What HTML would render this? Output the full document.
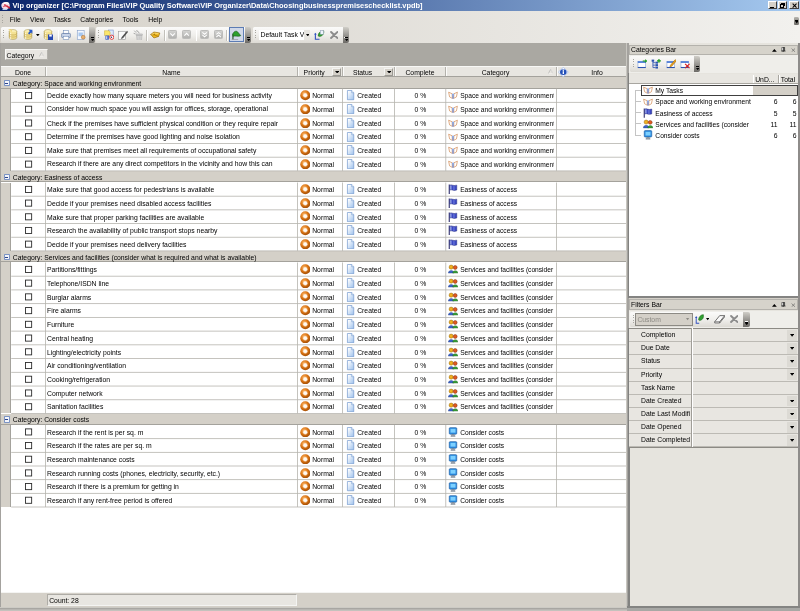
<!DOCTYPE html>
<html><head><meta charset="utf-8"><title>Vip organizer</title>
<style>
html,body{margin:0;padding:0;}
body{width:800px;height:611px;overflow:hidden;background:#d4d0c8;position:relative;font-family:"Liberation Sans", sans-serif;font-size:6.8px;color:#000;}
div,span.t,svg.i{position:absolute;box-sizing:border-box;}
span.t{white-space:pre;line-height:10px;margin-top:-4.1px;}
span.c{transform:translateX(-50%);}
span.r{transform:translateX(-100%);}
.cell{overflow:hidden;}
</style></head><body><div id="app" style="left:0;top:0;width:800px;height:611px;will-change:transform;">
<div style="left:0.00px;top:0.00px;width:800.00px;height:11.30px;background:linear-gradient(90deg,#0a246a,#a6caf0);"></div>
<svg class="i" style="left:1.20px;top:0.60px" width="10.40" height="9.80" viewBox="0 0 16 16" preserveAspectRatio="none"><ellipse cx="7" cy="7.5" rx="6.5" ry="6" fill="#f8dce6"/><ellipse cx="6" cy="14" rx="4" ry="1.4" fill="#b8d0f4"/><path d="M4 4.5c3-2 6-2 8 0" stroke="#fff" stroke-width="2.2" fill="none"/><path d="M5 6l9 5.5" stroke="#d02038" stroke-width="2.4"/><path d="M3 9.5l7-2" stroke="#e06878" stroke-width="1.6"/></svg>
<span class="t" style="left:12.50px;top:4.70px;color:#fff;font-weight:bold;font-size:7.44px;">Vip organizer [C:\Program Files\VIP Quality Software\VIP Organizer\Data\Choosingbusinesspremiseschecklist.vpdb]</span>
<div style="left:768.20px;top:1.20px;width:8.60px;height:8.20px;background:#d4d0c8;border:0.7px solid;border-color:#fff #404040 #404040 #fff;"></div>
<div style="left:770.30px;top:6.60px;width:3.60px;height:1.20px;background:#000;"></div>
<div style="left:778.20px;top:1.20px;width:9.20px;height:8.20px;background:#d4d0c8;border:0.7px solid;border-color:#fff #404040 #404040 #fff;"></div>
<div style="left:781.30px;top:2.80px;width:4.00px;height:3.60px;border:0.7px solid #000;border-top-width:1.2px;"></div>
<div style="left:779.80px;top:4.40px;width:4.00px;height:3.60px;border:0.7px solid #000;border-top-width:1.2px;background:#d4d0c8;"></div>
<div style="left:789.40px;top:1.20px;width:9.40px;height:8.20px;background:#d4d0c8;border:0.7px solid;border-color:#fff #404040 #404040 #fff;"></div>
<svg class="i" style="left:791.50px;top:2.80px" width="5.20" height="5.20" viewBox="0 0 16 16" preserveAspectRatio="none"><path d="M2 2l12 12M14 2L2 14" stroke="#000" stroke-width="3.2"/></svg>
<div style="left:0.00px;top:11.30px;width:800.00px;height:31.90px;background:linear-gradient(90deg,#d5d1c9 0%,#f2f1ee 100%);"></div>
<div style="left:2.20px;top:14.50px;width:1.00px;height:10.00px;background:repeating-linear-gradient(180deg,#a8a6a0 0 1px,transparent 1px 2.5px);"></div>
<span class="t" style="left:9.80px;top:19.40px;">File</span>
<span class="t" style="left:30.00px;top:19.40px;">View</span>
<span class="t" style="left:53.50px;top:19.40px;">Tasks</span>
<span class="t" style="left:80.30px;top:19.40px;">Categories</span>
<span class="t" style="left:122.50px;top:19.40px;">Tools</span>
<span class="t" style="left:148.30px;top:19.40px;">Help</span>
<div style="left:794.00px;top:16.60px;width:5.00px;height:8.00px;background:linear-gradient(180deg,#b8b6b0,#6c6a66);border-radius:1px 1.5px 1.5px 1px;"></div>
<div style="left:795.20px;top:19.60px;width:2.80px;height:0.90px;background:#000;"></div>
<svg class="i" style="left:794.80px;top:21.20px" width="3.60" height="2.40" viewBox="0 0 16 16" preserveAspectRatio="none"><path d="M0 0h16L8 16z" fill="#000"/></svg>
<div style="left:0.60px;top:27.40px;width:88.40px;height:15.20px;background:linear-gradient(180deg,#fbfbfa 0%,#f0efec 50%,#dcdad4 100%);border-radius:1.5px 0 0 1.5px;"></div>
<div style="left:89.00px;top:27.40px;width:6.30px;height:15.20px;background:linear-gradient(180deg,#d0cec8 0%,#8e8c88 60%,#6e6c68 100%);border-radius:0 2px 2px 0;"></div>
<div style="left:90.60px;top:37.00px;width:3.00px;height:0.90px;background:#fff;"></div>
<div style="left:90.90px;top:37.30px;width:3.00px;height:0.90px;background:#000;"></div>
<svg class="i" style="left:90.90px;top:38.80px" width="3.40" height="2.20" viewBox="0 0 16 16" preserveAspectRatio="none"><path d="M0 0h16L8 16z" fill="#000"/></svg>
<div style="left:2.80px;top:30.40px;width:1.00px;height:9.20px;background:repeating-linear-gradient(180deg,#a8a6a0 0 1px,transparent 1px 2.5px);"></div>
<div style="left:95.60px;top:27.40px;width:149.60px;height:15.20px;background:linear-gradient(180deg,#fbfbfa 0%,#f0efec 50%,#dcdad4 100%);border-radius:1.5px 0 0 1.5px;"></div>
<div style="left:245.20px;top:27.40px;width:6.30px;height:15.20px;background:linear-gradient(180deg,#d0cec8 0%,#8e8c88 60%,#6e6c68 100%);border-radius:0 2px 2px 0;"></div>
<div style="left:246.80px;top:37.00px;width:3.00px;height:0.90px;background:#fff;"></div>
<div style="left:247.10px;top:37.30px;width:3.00px;height:0.90px;background:#000;"></div>
<svg class="i" style="left:247.10px;top:38.80px" width="3.40" height="2.20" viewBox="0 0 16 16" preserveAspectRatio="none"><path d="M0 0h16L8 16z" fill="#000"/></svg>
<div style="left:97.80px;top:30.40px;width:1.00px;height:9.20px;background:repeating-linear-gradient(180deg,#a8a6a0 0 1px,transparent 1px 2.5px);"></div>
<div style="left:253.00px;top:27.40px;width:89.60px;height:15.20px;background:linear-gradient(180deg,#fbfbfa 0%,#f0efec 50%,#dcdad4 100%);border-radius:1.5px 0 0 1.5px;"></div>
<div style="left:342.60px;top:27.40px;width:6.30px;height:15.20px;background:linear-gradient(180deg,#d0cec8 0%,#8e8c88 60%,#6e6c68 100%);border-radius:0 2px 2px 0;"></div>
<div style="left:344.20px;top:37.00px;width:3.00px;height:0.90px;background:#fff;"></div>
<div style="left:344.50px;top:37.30px;width:3.00px;height:0.90px;background:#000;"></div>
<svg class="i" style="left:344.50px;top:38.80px" width="3.40" height="2.20" viewBox="0 0 16 16" preserveAspectRatio="none"><path d="M0 0h16L8 16z" fill="#000"/></svg>
<div style="left:255.20px;top:30.40px;width:1.00px;height:9.20px;background:repeating-linear-gradient(180deg,#a8a6a0 0 1px,transparent 1px 2.5px);"></div>
<svg class="i" style="left:8.00px;top:29.00px" width="10.00" height="11.00" viewBox="0 0 16 16" preserveAspectRatio="none"><ellipse cx="8" cy="3.5" rx="6" ry="2.6" fill="#fff8c8" stroke="#a08838" stroke-width="0.8"/><path d="M2 3.5v9c0 3.4 12 3.4 12 0v-9" fill="#f4e294" stroke="#a08838" stroke-width="0.8"/><path d="M4.2 5.5v8.5" stroke="#fffbe0" stroke-width="1.6"/><path d="M2 6.5c0 3 12 3 12 0M2 9.5c0 3 12 3 12 0" fill="none" stroke="#a88420" stroke-width="0.7"/><path d="M1 1l4 0 0 3" fill="#fff8c0" stroke="#e8c040" stroke-width="1"/></svg>
<svg class="i" style="left:23.00px;top:29.00px" width="10.00" height="11.00" viewBox="0 0 16 16" preserveAspectRatio="none"><ellipse cx="8" cy="3.5" rx="6" ry="2.6" fill="#fff8c8" stroke="#a08838" stroke-width="0.8"/><path d="M2 3.5v9c0 3.4 12 3.4 12 0v-9" fill="#f4e294" stroke="#a08838" stroke-width="0.8"/><path d="M4.2 5.5v8.5" stroke="#fffbe0" stroke-width="1.6"/><path d="M2 6.5c0 3 12 3 12 0M2 9.5c0 3 12 3 12 0" fill="none" stroke="#a88420" stroke-width="0.7"/><path d="M9 1h6v6l-2-2-3 3-2-2 3-3z" fill="#2858c8"/></svg>
<svg class="i" style="left:36.00px;top:33.80px" width="3.60" height="2.40" viewBox="0 0 16 16" preserveAspectRatio="none"><path d="M0 0h16L8 16z" fill="#000"/></svg>
<svg class="i" style="left:43.00px;top:29.00px" width="10.00" height="11.00" viewBox="0 0 16 16" preserveAspectRatio="none"><ellipse cx="8" cy="3.5" rx="6" ry="2.6" fill="#fff8c8" stroke="#a08838" stroke-width="0.8"/><path d="M2 3.5v9c0 3.4 12 3.4 12 0v-9" fill="#f4e294" stroke="#a08838" stroke-width="0.8"/><path d="M4.2 5.5v8.5" stroke="#fffbe0" stroke-width="1.6"/><path d="M2 6.5c0 3 12 3 12 0M2 9.5c0 3 12 3 12 0" fill="none" stroke="#a88420" stroke-width="0.7"/><rect x="8" y="8" width="8" height="8" fill="#2848b0"/><rect x="10" y="8" width="4" height="3" fill="#fff"/></svg>
<div style="left:57.50px;top:29.50px;width:0.80px;height:11.00px;background:#c2c0ba;"></div>
<div style="left:58.30px;top:30.00px;width:0.60px;height:11.00px;background:#fff;"></div>
<svg class="i" style="left:61.00px;top:29.50px" width="10.00" height="10.00" viewBox="0 0 16 16" preserveAspectRatio="none"><rect x="4" y="1" width="8" height="5" fill="#fff" stroke="#6080b0" stroke-width="0.8"/><rect x="1" y="5.5" width="14" height="6.5" rx="1" fill="#c8d4e8" stroke="#4c6898" stroke-width="0.9"/><rect x="3.5" y="10" width="9" height="5" fill="#fff" stroke="#6080b0" stroke-width="0.8"/></svg>
<svg class="i" style="left:76.00px;top:29.50px" width="10.00" height="10.00" viewBox="0 0 16 16" preserveAspectRatio="none"><rect x="2" y="1" width="11" height="14" fill="#f4f8ff" stroke="#7c98c4" stroke-width="0.9"/><rect x="4" y="4" width="7" height="6" fill="#a8c8f0"/><circle cx="11.5" cy="11.5" r="3" fill="#e8b070" stroke="#a06020" stroke-width="0.7"/></svg>
<svg class="i" style="left:103.80px;top:29.00px" width="10.50" height="11.00" viewBox="0 0 16 16" preserveAspectRatio="none"><rect x="6.5" y="1.5" width="7.5" height="9" fill="#dce8fc" stroke="#6c88c8" stroke-width="0.8"/><path d="M0.8 2.5h7l1.5 2v5H0.8z" fill="#fbe66c" stroke="#c8a830" stroke-width="0.7"/><rect x="2.2" y="9.5" width="5.2" height="6" fill="#3c5cc0"/><rect x="3.4" y="10.5" width="1.6" height="4" fill="#e8f0ff"/><circle cx="11.8" cy="12" r="3.1" fill="#fff" stroke="#dc2828" stroke-width="1.3"/><circle cx="11.4" cy="12" r="1.1" fill="#303060"/></svg>
<svg class="i" style="left:118.00px;top:29.50px" width="10.00" height="10.00" viewBox="0 0 16 16" preserveAspectRatio="none"><rect x="1" y="2" width="11" height="13" fill="#fafafa" stroke="#909090" stroke-width="0.9"/><path d="M14.5 1L6 11l-1.5 3.5L8 13 16 3z" fill="#505050"/></svg>
<svg class="i" style="left:132.50px;top:29.50px" width="10.00" height="10.50" viewBox="0 0 16 16" preserveAspectRatio="none"><path d="M2 1l3 3M6 0l1 3M1 5l3 1M8 2l2 3" stroke="#a4a4a4" stroke-width="1.5"/><path d="M5.5 8h9l-1 7.5h-7z" fill="#dadada" stroke="#acacac" stroke-width="0.8"/><rect x="4.8" y="6" width="10.4" height="2.2" fill="#c8c8c8" stroke="#a8a8a8" stroke-width="0.6"/><path d="M8 9.5v5M10.5 9.5v5M12.6 9.5v5" stroke="#b8b8b8" stroke-width="0.8"/></svg>
<div style="left:146.00px;top:29.50px;width:0.80px;height:11.00px;background:#c2c0ba;"></div>
<div style="left:146.80px;top:30.00px;width:0.60px;height:11.00px;background:#fff;"></div>
<svg class="i" style="left:150.00px;top:31.00px" width="10.50" height="7.50" viewBox="0 0 16 15" preserveAspectRatio="none"><path d="M1 7L6 2l9 2-2 7-7 3z" fill="#f0b820" stroke="#8a6000" stroke-width="1"/><path d="M6 2l1 6 6 3M7 8L1 7" fill="none" stroke="#8a6000" stroke-width="0.9"/><path d="M2 8l4-4 7 1.5" stroke="#ffe890" stroke-width="1.2" fill="none"/></svg>
<div style="left:163.80px;top:29.50px;width:0.80px;height:11.00px;background:#c2c0ba;"></div>
<div style="left:164.60px;top:30.00px;width:0.60px;height:11.00px;background:#fff;"></div>
<div style="left:168.00px;top:30.00px;width:9.20px;height:9.40px;background:linear-gradient(180deg,#d2d2d0,#b2b2b0);border:1px solid #bcbcba;border-radius:1.2px;"></div>
<svg class="i" style="left:169.00px;top:31.00px" width="7.20" height="7.40" viewBox="0 0 16 16" preserveAspectRatio="none"><path d="M3 5l5 5 5-5" fill="none" stroke="#fff" stroke-width="2.4"/></svg>
<div style="left:182.30px;top:30.00px;width:9.20px;height:9.40px;background:linear-gradient(180deg,#d2d2d0,#b2b2b0);border:1px solid #bcbcba;border-radius:1.2px;"></div>
<svg class="i" style="left:183.30px;top:31.00px" width="7.20" height="7.40" viewBox="0 0 16 16" preserveAspectRatio="none"><path d="M3 10l5-5 5 5" fill="none" stroke="#fff" stroke-width="2.4"/></svg>
<div style="left:195.60px;top:29.50px;width:0.80px;height:11.00px;background:#c2c0ba;"></div>
<div style="left:196.40px;top:30.00px;width:0.60px;height:11.00px;background:#fff;"></div>
<div style="left:200.00px;top:30.00px;width:9.20px;height:9.40px;background:linear-gradient(180deg,#d2d2d0,#b2b2b0);border:1px solid #bcbcba;border-radius:1.2px;"></div>
<svg class="i" style="left:201.00px;top:31.00px" width="7.20" height="7.40" viewBox="0 0 16 16" preserveAspectRatio="none"><path d="M3 3l5 4 5-4M3 8.5l5 4 5-4" fill="none" stroke="#fff" stroke-width="2.2"/></svg>
<div style="left:214.00px;top:30.00px;width:9.20px;height:9.40px;background:linear-gradient(180deg,#d2d2d0,#b2b2b0);border:1px solid #bcbcba;border-radius:1.2px;"></div>
<svg class="i" style="left:215.00px;top:31.00px" width="7.20" height="7.40" viewBox="0 0 16 16" preserveAspectRatio="none"><path d="M3 7.5l5-4 5 4M3 13l5-4 5 4" fill="none" stroke="#fff" stroke-width="2.2"/></svg>
<div style="left:226.30px;top:29.50px;width:0.80px;height:11.00px;background:#c2c0ba;"></div>
<div style="left:227.10px;top:30.00px;width:0.60px;height:11.00px;background:#fff;"></div>
<div style="left:229.00px;top:27.20px;width:14.60px;height:14.60px;background:#d0d8e8;border:1px solid #5c7cb4;"></div>
<svg class="i" style="left:231.20px;top:29.60px" width="10.40" height="10.00" viewBox="0 0 16 16" preserveAspectRatio="none"><path d="M3 15V6" stroke="#184818" stroke-width="1.6"/><path d="M3 6C5 1 9 1 11 4l4 5c-4 2-8 0-12 1z" fill="#2ca02c" stroke="#145014" stroke-width="0.9"/><path d="M1 15.3h10" stroke="#909090" stroke-width="1"/></svg>
<div style="left:259.00px;top:30.00px;width:50.60px;height:9.60px;background:#fff;"></div>
<span class="t" style="left:260.50px;top:34.00px;">Default Task V</span>
<div style="left:304.20px;top:30.00px;width:5.40px;height:9.60px;background:#e7e5e0;"></div>
<svg class="i" style="left:305.60px;top:33.80px" width="3.60" height="2.40" viewBox="0 0 16 16" preserveAspectRatio="none"><path d="M0 0h16L8 16z" fill="#000"/></svg>
<svg class="i" style="left:314.00px;top:29.50px" width="11.00" height="10.50" viewBox="0 0 16 16" preserveAspectRatio="none"><path d="M2 6v8h6" fill="none" stroke="#3050c0" stroke-width="1.6"/><path d="M0 7l2-3 2 3z" fill="#3050c0"/><path d="M6 9C6 4 10 1 14 1c1 4-1 8-6 9z" fill="#30a030" stroke="#186018" stroke-width="0.8"/><rect x="9" y="0.5" width="5" height="6" fill="#f0f4ff" stroke="#8090b0" stroke-width="0.6"/></svg>
<svg class="i" style="left:329.60px;top:30.80px" width="8.60" height="8.00" viewBox="0 0 16 16" preserveAspectRatio="none"><path d="M2 2l12 12M14 2L2 14" stroke="#8c8c8c" stroke-width="3.6" stroke-linecap="round"/></svg>
<div style="left:0.00px;top:43.20px;width:626.20px;height:22.60px;background:#aaa8a2;"></div>
<div style="left:5.00px;top:49.00px;width:42.60px;height:11.20px;background:#e8e6e1;border:1px solid;border-color:#f8f8f6 #b4b2ac #b4b2ac #f8f8f6;"></div>
<span class="t" style="left:6.60px;top:54.70px;">Category</span>
<svg class="i" style="left:38.70px;top:52.00px" width="5.20" height="5.00" viewBox="0 0 16 16" preserveAspectRatio="none"><path d="M1 15L8 1l7 14" fill="none" stroke="#a0a0a0" stroke-width="1.6"/><path d="M8 1l7 14H1" fill="none" stroke="#fff" stroke-width="1.2"/></svg>
<div style="left:0.00px;top:77.50px;width:626.60px;height:514.70px;background:#fff;"></div>
<div style="left:0.00px;top:77.00px;width:626.60px;height:11.60px;background:#d4d0c8;border-bottom:0.7px solid #a4a29c;"></div>
<div style="left:3.50px;top:79.70px;width:6.70px;height:6.70px;background:#f4f6fc;border:0.7px solid #7c94c4;border-radius:0.8px;"></div>
<div style="left:5.20px;top:82.70px;width:3.30px;height:0.75px;background:#2c448c;"></div>
<span class="t" style="left:12.80px;top:82.90px;">Category: Space and working environment</span>
<span class="t" style="left:47.00px;top:95.36px;">Decide exactly how many square meters you will need for business activity</span>
<svg class="i" style="left:299.60px;top:90.16px" width="10.60" height="10.60" viewBox="0 0 16 16" preserveAspectRatio="none"><defs><radialGradient id="gp" cx="0.4" cy="0.35" r="0.7"><stop offset="0" stop-color="#ffc078"/><stop offset="0.5" stop-color="#dc7614"/><stop offset="1" stop-color="#9c4802"/></radialGradient></defs><circle cx="8" cy="8" r="7.6" fill="url(#gp)"/><circle cx="8" cy="8" r="3.6" fill="#fff" opacity="0.55"/><circle cx="8" cy="8" r="2.6" fill="#fffaf2"/></svg>
<span class="t" style="left:312.20px;top:95.36px;">Normal</span>
<svg class="i" style="left:345.80px;top:90.36px" width="9.20" height="10.20" viewBox="0 0 16 16" preserveAspectRatio="none"><defs><linearGradient id="gd" x1="0" y1="0" x2="1" y2="1"><stop offset="0.1" stop-color="#ffffff"/><stop offset="1" stop-color="#9cc0ec"/></linearGradient></defs><path d="M2.5 0.8h7.5l3.5 3.5v11H2.5z" fill="url(#gd)" stroke="#6c94cc" stroke-width="1.1"/><path d="M10 0.8v3.5h3.5" fill="#fff" stroke="#6c94cc" stroke-width="1"/></svg>
<span class="t" style="left:357.20px;top:95.36px;">Created</span>
<span class="t c" style="left:420.40px;top:95.36px;">0 %</span>
<svg class="i" style="left:448.00px;top:90.46px" width="10.00" height="10.00" viewBox="0 0 16 16" preserveAspectRatio="none"><path d="M1 3.5 L6.5 6 L7 13.5 L2.5 11z" fill="#fff" stroke="#d08850" stroke-width="1.1"/><path d="M15 3.5 L9.5 6 L9 13.5 L13.5 11z" fill="#fff" stroke="#d08850" stroke-width="1.1"/><path d="M8 7.5 v6.5" stroke="#6c8cd8" stroke-width="2"/><circle cx="8" cy="7" r="1.6" fill="#88a8e8"/></svg>
<div class="cell" style="left:459px;top:88.60px;width:94.7px;height:13.72px;"><span class="t" style="left:1.2px;top:6.76px;font-size:6.65px">Space and working environment</span></div>
<span class="t" style="left:47.00px;top:108.28px;">Consider how much space you will assign for offices, storage, operational</span>
<svg class="i" style="left:299.60px;top:103.88px" width="10.60" height="10.60" viewBox="0 0 16 16" preserveAspectRatio="none"><circle cx="8" cy="8" r="7.6" fill="url(#gp)"/><circle cx="8" cy="8" r="3.6" fill="#fff" opacity="0.55"/><circle cx="8" cy="8" r="2.6" fill="#fffaf2"/></svg>
<span class="t" style="left:312.20px;top:109.08px;">Normal</span>
<svg class="i" style="left:345.80px;top:104.08px" width="9.20" height="10.20" viewBox="0 0 16 16" preserveAspectRatio="none"><path d="M2.5 0.8h7.5l3.5 3.5v11H2.5z" fill="url(#gd)" stroke="#6c94cc" stroke-width="1.1"/><path d="M10 0.8v3.5h3.5" fill="#fff" stroke="#6c94cc" stroke-width="1"/></svg>
<span class="t" style="left:357.20px;top:109.08px;">Created</span>
<span class="t c" style="left:420.40px;top:109.08px;">0 %</span>
<svg class="i" style="left:448.00px;top:104.17px" width="10.00" height="10.00" viewBox="0 0 16 16" preserveAspectRatio="none"><path d="M1 3.5 L6.5 6 L7 13.5 L2.5 11z" fill="#fff" stroke="#d08850" stroke-width="1.1"/><path d="M15 3.5 L9.5 6 L9 13.5 L13.5 11z" fill="#fff" stroke="#d08850" stroke-width="1.1"/><path d="M8 7.5 v6.5" stroke="#6c8cd8" stroke-width="2"/><circle cx="8" cy="7" r="1.6" fill="#88a8e8"/></svg>
<div class="cell" style="left:459px;top:102.32px;width:94.7px;height:13.72px;"><span class="t" style="left:1.2px;top:6.76px;font-size:6.65px">Space and working environment</span></div>
<span class="t" style="left:47.00px;top:122.79px;">Check if the premises have sufficient physical condition or they require repair</span>
<svg class="i" style="left:299.60px;top:117.59px" width="10.60" height="10.60" viewBox="0 0 16 16" preserveAspectRatio="none"><circle cx="8" cy="8" r="7.6" fill="url(#gp)"/><circle cx="8" cy="8" r="3.6" fill="#fff" opacity="0.55"/><circle cx="8" cy="8" r="2.6" fill="#fffaf2"/></svg>
<span class="t" style="left:312.20px;top:122.79px;">Normal</span>
<svg class="i" style="left:345.80px;top:117.79px" width="9.20" height="10.20" viewBox="0 0 16 16" preserveAspectRatio="none"><path d="M2.5 0.8h7.5l3.5 3.5v11H2.5z" fill="url(#gd)" stroke="#6c94cc" stroke-width="1.1"/><path d="M10 0.8v3.5h3.5" fill="#fff" stroke="#6c94cc" stroke-width="1"/></svg>
<span class="t" style="left:357.20px;top:122.79px;">Created</span>
<span class="t c" style="left:420.40px;top:122.79px;">0 %</span>
<svg class="i" style="left:448.00px;top:117.89px" width="10.00" height="10.00" viewBox="0 0 16 16" preserveAspectRatio="none"><path d="M1 3.5 L6.5 6 L7 13.5 L2.5 11z" fill="#fff" stroke="#d08850" stroke-width="1.1"/><path d="M15 3.5 L9.5 6 L9 13.5 L13.5 11z" fill="#fff" stroke="#d08850" stroke-width="1.1"/><path d="M8 7.5 v6.5" stroke="#6c8cd8" stroke-width="2"/><circle cx="8" cy="7" r="1.6" fill="#88a8e8"/></svg>
<div class="cell" style="left:459px;top:116.03px;width:94.7px;height:13.72px;"><span class="t" style="left:1.2px;top:6.76px;font-size:6.65px">Space and working environment</span></div>
<span class="t" style="left:47.00px;top:136.51px;">Determine if the premises have good lighting and noise isolation</span>
<svg class="i" style="left:299.60px;top:131.31px" width="10.60" height="10.60" viewBox="0 0 16 16" preserveAspectRatio="none"><circle cx="8" cy="8" r="7.6" fill="url(#gp)"/><circle cx="8" cy="8" r="3.6" fill="#fff" opacity="0.55"/><circle cx="8" cy="8" r="2.6" fill="#fffaf2"/></svg>
<span class="t" style="left:312.20px;top:136.51px;">Normal</span>
<svg class="i" style="left:345.80px;top:131.51px" width="9.20" height="10.20" viewBox="0 0 16 16" preserveAspectRatio="none"><path d="M2.5 0.8h7.5l3.5 3.5v11H2.5z" fill="url(#gd)" stroke="#6c94cc" stroke-width="1.1"/><path d="M10 0.8v3.5h3.5" fill="#fff" stroke="#6c94cc" stroke-width="1"/></svg>
<span class="t" style="left:357.20px;top:136.51px;">Created</span>
<span class="t c" style="left:420.40px;top:136.51px;">0 %</span>
<svg class="i" style="left:448.00px;top:131.61px" width="10.00" height="10.00" viewBox="0 0 16 16" preserveAspectRatio="none"><path d="M1 3.5 L6.5 6 L7 13.5 L2.5 11z" fill="#fff" stroke="#d08850" stroke-width="1.1"/><path d="M15 3.5 L9.5 6 L9 13.5 L13.5 11z" fill="#fff" stroke="#d08850" stroke-width="1.1"/><path d="M8 7.5 v6.5" stroke="#6c8cd8" stroke-width="2"/><circle cx="8" cy="7" r="1.6" fill="#88a8e8"/></svg>
<div class="cell" style="left:459px;top:129.75px;width:94.7px;height:13.72px;"><span class="t" style="left:1.2px;top:6.76px;font-size:6.65px">Space and working environment</span></div>
<span class="t" style="left:47.00px;top:150.22px;">Make sure that premises meet all requirements of occupational safety</span>
<svg class="i" style="left:299.60px;top:145.02px" width="10.60" height="10.60" viewBox="0 0 16 16" preserveAspectRatio="none"><circle cx="8" cy="8" r="7.6" fill="url(#gp)"/><circle cx="8" cy="8" r="3.6" fill="#fff" opacity="0.55"/><circle cx="8" cy="8" r="2.6" fill="#fffaf2"/></svg>
<span class="t" style="left:312.20px;top:150.22px;">Normal</span>
<svg class="i" style="left:345.80px;top:145.22px" width="9.20" height="10.20" viewBox="0 0 16 16" preserveAspectRatio="none"><path d="M2.5 0.8h7.5l3.5 3.5v11H2.5z" fill="url(#gd)" stroke="#6c94cc" stroke-width="1.1"/><path d="M10 0.8v3.5h3.5" fill="#fff" stroke="#6c94cc" stroke-width="1"/></svg>
<span class="t" style="left:357.20px;top:150.22px;">Created</span>
<span class="t c" style="left:420.40px;top:150.22px;">0 %</span>
<svg class="i" style="left:448.00px;top:145.32px" width="10.00" height="10.00" viewBox="0 0 16 16" preserveAspectRatio="none"><path d="M1 3.5 L6.5 6 L7 13.5 L2.5 11z" fill="#fff" stroke="#d08850" stroke-width="1.1"/><path d="M15 3.5 L9.5 6 L9 13.5 L13.5 11z" fill="#fff" stroke="#d08850" stroke-width="1.1"/><path d="M8 7.5 v6.5" stroke="#6c8cd8" stroke-width="2"/><circle cx="8" cy="7" r="1.6" fill="#88a8e8"/></svg>
<div class="cell" style="left:459px;top:143.47px;width:94.7px;height:13.72px;"><span class="t" style="left:1.2px;top:6.76px;font-size:6.65px">Space and working environment</span></div>
<span class="t" style="left:47.00px;top:163.54px;">Research if there are any direct competitors in the vicinity and how this can</span>
<svg class="i" style="left:299.60px;top:158.74px" width="10.60" height="10.60" viewBox="0 0 16 16" preserveAspectRatio="none"><circle cx="8" cy="8" r="7.6" fill="url(#gp)"/><circle cx="8" cy="8" r="3.6" fill="#fff" opacity="0.55"/><circle cx="8" cy="8" r="2.6" fill="#fffaf2"/></svg>
<span class="t" style="left:312.20px;top:163.94px;">Normal</span>
<svg class="i" style="left:345.80px;top:158.94px" width="9.20" height="10.20" viewBox="0 0 16 16" preserveAspectRatio="none"><path d="M2.5 0.8h7.5l3.5 3.5v11H2.5z" fill="url(#gd)" stroke="#6c94cc" stroke-width="1.1"/><path d="M10 0.8v3.5h3.5" fill="#fff" stroke="#6c94cc" stroke-width="1"/></svg>
<span class="t" style="left:357.20px;top:163.94px;">Created</span>
<span class="t c" style="left:420.40px;top:163.94px;">0 %</span>
<svg class="i" style="left:448.00px;top:159.04px" width="10.00" height="10.00" viewBox="0 0 16 16" preserveAspectRatio="none"><path d="M1 3.5 L6.5 6 L7 13.5 L2.5 11z" fill="#fff" stroke="#d08850" stroke-width="1.1"/><path d="M15 3.5 L9.5 6 L9 13.5 L13.5 11z" fill="#fff" stroke="#d08850" stroke-width="1.1"/><path d="M8 7.5 v6.5" stroke="#6c8cd8" stroke-width="2"/><circle cx="8" cy="7" r="1.6" fill="#88a8e8"/></svg>
<div class="cell" style="left:459px;top:157.18px;width:94.7px;height:13.72px;"><span class="t" style="left:1.2px;top:6.76px;font-size:6.65px">Space and working environment</span></div>
<div style="left:0.00px;top:88.60px;width:11.20px;height:82.30px;background:#d4d0c8;border-right:0.7px solid #a4a29c;"></div>
<div style="left:0.00px;top:170.90px;width:626.60px;height:11.60px;background:#d4d0c8;border-bottom:0.7px solid #a4a29c;"></div>
<div style="left:3.50px;top:173.60px;width:6.70px;height:6.70px;background:#f4f6fc;border:0.7px solid #7c94c4;border-radius:0.8px;"></div>
<div style="left:5.20px;top:176.60px;width:3.30px;height:0.75px;background:#2c448c;"></div>
<span class="t" style="left:12.80px;top:176.80px;">Category: Easiness of access</span>
<span class="t" style="left:47.00px;top:189.24px;">Make sure that good access for pedestrians is available</span>
<svg class="i" style="left:299.60px;top:184.04px" width="10.60" height="10.60" viewBox="0 0 16 16" preserveAspectRatio="none"><circle cx="8" cy="8" r="7.6" fill="url(#gp)"/><circle cx="8" cy="8" r="3.6" fill="#fff" opacity="0.55"/><circle cx="8" cy="8" r="2.6" fill="#fffaf2"/></svg>
<span class="t" style="left:312.20px;top:189.24px;">Normal</span>
<svg class="i" style="left:345.80px;top:184.24px" width="9.20" height="10.20" viewBox="0 0 16 16" preserveAspectRatio="none"><path d="M2.5 0.8h7.5l3.5 3.5v11H2.5z" fill="url(#gd)" stroke="#6c94cc" stroke-width="1.1"/><path d="M10 0.8v3.5h3.5" fill="#fff" stroke="#6c94cc" stroke-width="1"/></svg>
<span class="t" style="left:357.20px;top:189.24px;">Created</span>
<span class="t c" style="left:420.40px;top:189.24px;">0 %</span>
<svg class="i" style="left:448.00px;top:184.34px" width="10.00" height="10.00" viewBox="0 0 16 16" preserveAspectRatio="none"><path d="M2 0.8v15" stroke="#282868" stroke-width="1.7"/><path d="M3 1.8 C6 0.3 8 3.8 14 1.8 V9.6 C8 11.6 6 8.1 3 9.6z" fill="#3c48c4" stroke="#20287c" stroke-width="0.8"/><path d="M4.6 2.2v6.6" stroke="#c8d4f8" stroke-width="1.5"/><path d="M9.5 3.4v6.4" stroke="#7c8ce0" stroke-width="1.4"/></svg>
<div class="cell" style="left:459px;top:182.50px;width:94.7px;height:13.68px;"><span class="t" style="left:1.2px;top:6.74px;font-size:6.65px">Easiness of access</span></div>
<span class="t" style="left:47.00px;top:202.92px;">Decide if your premises need disabled access facilities</span>
<svg class="i" style="left:299.60px;top:197.72px" width="10.60" height="10.60" viewBox="0 0 16 16" preserveAspectRatio="none"><circle cx="8" cy="8" r="7.6" fill="url(#gp)"/><circle cx="8" cy="8" r="3.6" fill="#fff" opacity="0.55"/><circle cx="8" cy="8" r="2.6" fill="#fffaf2"/></svg>
<span class="t" style="left:312.20px;top:202.92px;">Normal</span>
<svg class="i" style="left:345.80px;top:197.92px" width="9.20" height="10.20" viewBox="0 0 16 16" preserveAspectRatio="none"><path d="M2.5 0.8h7.5l3.5 3.5v11H2.5z" fill="url(#gd)" stroke="#6c94cc" stroke-width="1.1"/><path d="M10 0.8v3.5h3.5" fill="#fff" stroke="#6c94cc" stroke-width="1"/></svg>
<span class="t" style="left:357.20px;top:202.92px;">Created</span>
<span class="t c" style="left:420.40px;top:202.92px;">0 %</span>
<svg class="i" style="left:448.00px;top:198.02px" width="10.00" height="10.00" viewBox="0 0 16 16" preserveAspectRatio="none"><path d="M2 0.8v15" stroke="#282868" stroke-width="1.7"/><path d="M3 1.8 C6 0.3 8 3.8 14 1.8 V9.6 C8 11.6 6 8.1 3 9.6z" fill="#3c48c4" stroke="#20287c" stroke-width="0.8"/><path d="M4.6 2.2v6.6" stroke="#c8d4f8" stroke-width="1.5"/><path d="M9.5 3.4v6.4" stroke="#7c8ce0" stroke-width="1.4"/></svg>
<div class="cell" style="left:459px;top:196.18px;width:94.7px;height:13.68px;"><span class="t" style="left:1.2px;top:6.74px;font-size:6.65px">Easiness of access</span></div>
<span class="t" style="left:47.00px;top:216.60px;">Make sure that proper parking facilities are available</span>
<svg class="i" style="left:299.60px;top:211.40px" width="10.60" height="10.60" viewBox="0 0 16 16" preserveAspectRatio="none"><circle cx="8" cy="8" r="7.6" fill="url(#gp)"/><circle cx="8" cy="8" r="3.6" fill="#fff" opacity="0.55"/><circle cx="8" cy="8" r="2.6" fill="#fffaf2"/></svg>
<span class="t" style="left:312.20px;top:216.60px;">Normal</span>
<svg class="i" style="left:345.80px;top:211.60px" width="9.20" height="10.20" viewBox="0 0 16 16" preserveAspectRatio="none"><path d="M2.5 0.8h7.5l3.5 3.5v11H2.5z" fill="url(#gd)" stroke="#6c94cc" stroke-width="1.1"/><path d="M10 0.8v3.5h3.5" fill="#fff" stroke="#6c94cc" stroke-width="1"/></svg>
<span class="t" style="left:357.20px;top:216.60px;">Created</span>
<span class="t c" style="left:420.40px;top:216.60px;">0 %</span>
<svg class="i" style="left:448.00px;top:211.70px" width="10.00" height="10.00" viewBox="0 0 16 16" preserveAspectRatio="none"><path d="M2 0.8v15" stroke="#282868" stroke-width="1.7"/><path d="M3 1.8 C6 0.3 8 3.8 14 1.8 V9.6 C8 11.6 6 8.1 3 9.6z" fill="#3c48c4" stroke="#20287c" stroke-width="0.8"/><path d="M4.6 2.2v6.6" stroke="#c8d4f8" stroke-width="1.5"/><path d="M9.5 3.4v6.4" stroke="#7c8ce0" stroke-width="1.4"/></svg>
<div class="cell" style="left:459px;top:209.86px;width:94.7px;height:13.68px;"><span class="t" style="left:1.2px;top:6.74px;font-size:6.65px">Easiness of access</span></div>
<span class="t" style="left:47.00px;top:230.28px;">Research the availability of public transport stops nearby</span>
<svg class="i" style="left:299.60px;top:225.08px" width="10.60" height="10.60" viewBox="0 0 16 16" preserveAspectRatio="none"><circle cx="8" cy="8" r="7.6" fill="url(#gp)"/><circle cx="8" cy="8" r="3.6" fill="#fff" opacity="0.55"/><circle cx="8" cy="8" r="2.6" fill="#fffaf2"/></svg>
<span class="t" style="left:312.20px;top:230.28px;">Normal</span>
<svg class="i" style="left:345.80px;top:225.28px" width="9.20" height="10.20" viewBox="0 0 16 16" preserveAspectRatio="none"><path d="M2.5 0.8h7.5l3.5 3.5v11H2.5z" fill="url(#gd)" stroke="#6c94cc" stroke-width="1.1"/><path d="M10 0.8v3.5h3.5" fill="#fff" stroke="#6c94cc" stroke-width="1"/></svg>
<span class="t" style="left:357.20px;top:230.28px;">Created</span>
<span class="t c" style="left:420.40px;top:230.28px;">0 %</span>
<svg class="i" style="left:448.00px;top:225.38px" width="10.00" height="10.00" viewBox="0 0 16 16" preserveAspectRatio="none"><path d="M2 0.8v15" stroke="#282868" stroke-width="1.7"/><path d="M3 1.8 C6 0.3 8 3.8 14 1.8 V9.6 C8 11.6 6 8.1 3 9.6z" fill="#3c48c4" stroke="#20287c" stroke-width="0.8"/><path d="M4.6 2.2v6.6" stroke="#c8d4f8" stroke-width="1.5"/><path d="M9.5 3.4v6.4" stroke="#7c8ce0" stroke-width="1.4"/></svg>
<div class="cell" style="left:459px;top:223.54px;width:94.7px;height:13.68px;"><span class="t" style="left:1.2px;top:6.74px;font-size:6.65px">Easiness of access</span></div>
<span class="t" style="left:47.00px;top:243.96px;">Decide if your premises need delivery facilities</span>
<svg class="i" style="left:299.60px;top:238.76px" width="10.60" height="10.60" viewBox="0 0 16 16" preserveAspectRatio="none"><circle cx="8" cy="8" r="7.6" fill="url(#gp)"/><circle cx="8" cy="8" r="3.6" fill="#fff" opacity="0.55"/><circle cx="8" cy="8" r="2.6" fill="#fffaf2"/></svg>
<span class="t" style="left:312.20px;top:243.96px;">Normal</span>
<svg class="i" style="left:345.80px;top:238.96px" width="9.20" height="10.20" viewBox="0 0 16 16" preserveAspectRatio="none"><path d="M2.5 0.8h7.5l3.5 3.5v11H2.5z" fill="url(#gd)" stroke="#6c94cc" stroke-width="1.1"/><path d="M10 0.8v3.5h3.5" fill="#fff" stroke="#6c94cc" stroke-width="1"/></svg>
<span class="t" style="left:357.20px;top:243.96px;">Created</span>
<span class="t c" style="left:420.40px;top:243.96px;">0 %</span>
<svg class="i" style="left:448.00px;top:239.06px" width="10.00" height="10.00" viewBox="0 0 16 16" preserveAspectRatio="none"><path d="M2 0.8v15" stroke="#282868" stroke-width="1.7"/><path d="M3 1.8 C6 0.3 8 3.8 14 1.8 V9.6 C8 11.6 6 8.1 3 9.6z" fill="#3c48c4" stroke="#20287c" stroke-width="0.8"/><path d="M4.6 2.2v6.6" stroke="#c8d4f8" stroke-width="1.5"/><path d="M9.5 3.4v6.4" stroke="#7c8ce0" stroke-width="1.4"/></svg>
<div class="cell" style="left:459px;top:237.22px;width:94.7px;height:13.68px;"><span class="t" style="left:1.2px;top:6.74px;font-size:6.65px">Easiness of access</span></div>
<div style="left:0.00px;top:182.50px;width:11.20px;height:68.40px;background:#d4d0c8;border-right:0.7px solid #a4a29c;"></div>
<div style="left:0.00px;top:250.90px;width:626.60px;height:11.55px;background:#d4d0c8;border-bottom:0.7px solid #a4a29c;"></div>
<div style="left:3.50px;top:253.60px;width:6.70px;height:6.70px;background:#f4f6fc;border:0.7px solid #7c94c4;border-radius:0.8px;"></div>
<div style="left:5.20px;top:256.60px;width:3.30px;height:0.75px;background:#2c448c;"></div>
<span class="t" style="left:12.80px;top:256.78px;">Category: Services and facilities (consider what is required and what is available)</span>
<span class="t" style="left:47.00px;top:269.22px;">Partitions/fittings</span>
<svg class="i" style="left:299.60px;top:264.02px" width="10.60" height="10.60" viewBox="0 0 16 16" preserveAspectRatio="none"><circle cx="8" cy="8" r="7.6" fill="url(#gp)"/><circle cx="8" cy="8" r="3.6" fill="#fff" opacity="0.55"/><circle cx="8" cy="8" r="2.6" fill="#fffaf2"/></svg>
<span class="t" style="left:312.20px;top:269.22px;">Normal</span>
<svg class="i" style="left:345.80px;top:264.22px" width="9.20" height="10.20" viewBox="0 0 16 16" preserveAspectRatio="none"><path d="M2.5 0.8h7.5l3.5 3.5v11H2.5z" fill="url(#gd)" stroke="#6c94cc" stroke-width="1.1"/><path d="M10 0.8v3.5h3.5" fill="#fff" stroke="#6c94cc" stroke-width="1"/></svg>
<span class="t" style="left:357.20px;top:269.22px;">Created</span>
<span class="t c" style="left:420.40px;top:269.22px;">0 %</span>
<svg class="i" style="left:448.00px;top:264.32px" width="10.00" height="10.00" viewBox="0 0 16 16" preserveAspectRatio="none"><circle cx="5" cy="5" r="3.3" fill="#f0b020" stroke="#8a5a00" stroke-width="0.7"/><path d="M0.5 14.5 C0.5 9 9.5 9 9.5 14.5z" fill="#3c64c8" stroke="#203880" stroke-width="0.6"/><circle cx="11.5" cy="5.5" r="3.1" fill="#e05a20" stroke="#702000" stroke-width="0.7"/><path d="M7.5 14.5 C7.5 9.5 15.8 9.5 15.8 14.5z" fill="#38a038" stroke="#1c5c1c" stroke-width="0.6"/></svg>
<div class="cell" style="left:459px;top:262.45px;width:94.7px;height:13.73px;"><span class="t" style="left:1.2px;top:6.77px;font-size:6.65px">Services and facilities (consider</span></div>
<span class="t" style="left:47.00px;top:282.95px;">Telephone/ISDN line</span>
<svg class="i" style="left:299.60px;top:277.75px" width="10.60" height="10.60" viewBox="0 0 16 16" preserveAspectRatio="none"><circle cx="8" cy="8" r="7.6" fill="url(#gp)"/><circle cx="8" cy="8" r="3.6" fill="#fff" opacity="0.55"/><circle cx="8" cy="8" r="2.6" fill="#fffaf2"/></svg>
<span class="t" style="left:312.20px;top:282.95px;">Normal</span>
<svg class="i" style="left:345.80px;top:277.95px" width="9.20" height="10.20" viewBox="0 0 16 16" preserveAspectRatio="none"><path d="M2.5 0.8h7.5l3.5 3.5v11H2.5z" fill="url(#gd)" stroke="#6c94cc" stroke-width="1.1"/><path d="M10 0.8v3.5h3.5" fill="#fff" stroke="#6c94cc" stroke-width="1"/></svg>
<span class="t" style="left:357.20px;top:282.95px;">Created</span>
<span class="t c" style="left:420.40px;top:282.95px;">0 %</span>
<svg class="i" style="left:448.00px;top:278.05px" width="10.00" height="10.00" viewBox="0 0 16 16" preserveAspectRatio="none"><circle cx="5" cy="5" r="3.3" fill="#f0b020" stroke="#8a5a00" stroke-width="0.7"/><path d="M0.5 14.5 C0.5 9 9.5 9 9.5 14.5z" fill="#3c64c8" stroke="#203880" stroke-width="0.6"/><circle cx="11.5" cy="5.5" r="3.1" fill="#e05a20" stroke="#702000" stroke-width="0.7"/><path d="M7.5 14.5 C7.5 9.5 15.8 9.5 15.8 14.5z" fill="#38a038" stroke="#1c5c1c" stroke-width="0.6"/></svg>
<div class="cell" style="left:459px;top:276.18px;width:94.7px;height:13.73px;"><span class="t" style="left:1.2px;top:6.77px;font-size:6.65px">Services and facilities (consider</span></div>
<span class="t" style="left:47.00px;top:296.68px;">Burglar alarms</span>
<svg class="i" style="left:299.60px;top:291.48px" width="10.60" height="10.60" viewBox="0 0 16 16" preserveAspectRatio="none"><circle cx="8" cy="8" r="7.6" fill="url(#gp)"/><circle cx="8" cy="8" r="3.6" fill="#fff" opacity="0.55"/><circle cx="8" cy="8" r="2.6" fill="#fffaf2"/></svg>
<span class="t" style="left:312.20px;top:296.68px;">Normal</span>
<svg class="i" style="left:345.80px;top:291.68px" width="9.20" height="10.20" viewBox="0 0 16 16" preserveAspectRatio="none"><path d="M2.5 0.8h7.5l3.5 3.5v11H2.5z" fill="url(#gd)" stroke="#6c94cc" stroke-width="1.1"/><path d="M10 0.8v3.5h3.5" fill="#fff" stroke="#6c94cc" stroke-width="1"/></svg>
<span class="t" style="left:357.20px;top:296.68px;">Created</span>
<span class="t c" style="left:420.40px;top:296.68px;">0 %</span>
<svg class="i" style="left:448.00px;top:291.78px" width="10.00" height="10.00" viewBox="0 0 16 16" preserveAspectRatio="none"><circle cx="5" cy="5" r="3.3" fill="#f0b020" stroke="#8a5a00" stroke-width="0.7"/><path d="M0.5 14.5 C0.5 9 9.5 9 9.5 14.5z" fill="#3c64c8" stroke="#203880" stroke-width="0.6"/><circle cx="11.5" cy="5.5" r="3.1" fill="#e05a20" stroke="#702000" stroke-width="0.7"/><path d="M7.5 14.5 C7.5 9.5 15.8 9.5 15.8 14.5z" fill="#38a038" stroke="#1c5c1c" stroke-width="0.6"/></svg>
<div class="cell" style="left:459px;top:289.91px;width:94.7px;height:13.73px;"><span class="t" style="left:1.2px;top:6.77px;font-size:6.65px">Services and facilities (consider</span></div>
<span class="t" style="left:47.00px;top:310.41px;">Fire alarms</span>
<svg class="i" style="left:299.60px;top:305.21px" width="10.60" height="10.60" viewBox="0 0 16 16" preserveAspectRatio="none"><circle cx="8" cy="8" r="7.6" fill="url(#gp)"/><circle cx="8" cy="8" r="3.6" fill="#fff" opacity="0.55"/><circle cx="8" cy="8" r="2.6" fill="#fffaf2"/></svg>
<span class="t" style="left:312.20px;top:310.41px;">Normal</span>
<svg class="i" style="left:345.80px;top:305.41px" width="9.20" height="10.20" viewBox="0 0 16 16" preserveAspectRatio="none"><path d="M2.5 0.8h7.5l3.5 3.5v11H2.5z" fill="url(#gd)" stroke="#6c94cc" stroke-width="1.1"/><path d="M10 0.8v3.5h3.5" fill="#fff" stroke="#6c94cc" stroke-width="1"/></svg>
<span class="t" style="left:357.20px;top:310.41px;">Created</span>
<span class="t c" style="left:420.40px;top:310.41px;">0 %</span>
<svg class="i" style="left:448.00px;top:305.51px" width="10.00" height="10.00" viewBox="0 0 16 16" preserveAspectRatio="none"><circle cx="5" cy="5" r="3.3" fill="#f0b020" stroke="#8a5a00" stroke-width="0.7"/><path d="M0.5 14.5 C0.5 9 9.5 9 9.5 14.5z" fill="#3c64c8" stroke="#203880" stroke-width="0.6"/><circle cx="11.5" cy="5.5" r="3.1" fill="#e05a20" stroke="#702000" stroke-width="0.7"/><path d="M7.5 14.5 C7.5 9.5 15.8 9.5 15.8 14.5z" fill="#38a038" stroke="#1c5c1c" stroke-width="0.6"/></svg>
<div class="cell" style="left:459px;top:303.65px;width:94.7px;height:13.73px;"><span class="t" style="left:1.2px;top:6.77px;font-size:6.65px">Services and facilities (consider</span></div>
<span class="t" style="left:47.00px;top:324.14px;">Furniture</span>
<svg class="i" style="left:299.60px;top:318.94px" width="10.60" height="10.60" viewBox="0 0 16 16" preserveAspectRatio="none"><circle cx="8" cy="8" r="7.6" fill="url(#gp)"/><circle cx="8" cy="8" r="3.6" fill="#fff" opacity="0.55"/><circle cx="8" cy="8" r="2.6" fill="#fffaf2"/></svg>
<span class="t" style="left:312.20px;top:324.14px;">Normal</span>
<svg class="i" style="left:345.80px;top:319.14px" width="9.20" height="10.20" viewBox="0 0 16 16" preserveAspectRatio="none"><path d="M2.5 0.8h7.5l3.5 3.5v11H2.5z" fill="url(#gd)" stroke="#6c94cc" stroke-width="1.1"/><path d="M10 0.8v3.5h3.5" fill="#fff" stroke="#6c94cc" stroke-width="1"/></svg>
<span class="t" style="left:357.20px;top:324.14px;">Created</span>
<span class="t c" style="left:420.40px;top:324.14px;">0 %</span>
<svg class="i" style="left:448.00px;top:319.24px" width="10.00" height="10.00" viewBox="0 0 16 16" preserveAspectRatio="none"><circle cx="5" cy="5" r="3.3" fill="#f0b020" stroke="#8a5a00" stroke-width="0.7"/><path d="M0.5 14.5 C0.5 9 9.5 9 9.5 14.5z" fill="#3c64c8" stroke="#203880" stroke-width="0.6"/><circle cx="11.5" cy="5.5" r="3.1" fill="#e05a20" stroke="#702000" stroke-width="0.7"/><path d="M7.5 14.5 C7.5 9.5 15.8 9.5 15.8 14.5z" fill="#38a038" stroke="#1c5c1c" stroke-width="0.6"/></svg>
<div class="cell" style="left:459px;top:317.38px;width:94.7px;height:13.73px;"><span class="t" style="left:1.2px;top:6.77px;font-size:6.65px">Services and facilities (consider</span></div>
<span class="t" style="left:47.00px;top:337.88px;">Central heating</span>
<svg class="i" style="left:299.60px;top:332.68px" width="10.60" height="10.60" viewBox="0 0 16 16" preserveAspectRatio="none"><circle cx="8" cy="8" r="7.6" fill="url(#gp)"/><circle cx="8" cy="8" r="3.6" fill="#fff" opacity="0.55"/><circle cx="8" cy="8" r="2.6" fill="#fffaf2"/></svg>
<span class="t" style="left:312.20px;top:337.88px;">Normal</span>
<svg class="i" style="left:345.80px;top:332.88px" width="9.20" height="10.20" viewBox="0 0 16 16" preserveAspectRatio="none"><path d="M2.5 0.8h7.5l3.5 3.5v11H2.5z" fill="url(#gd)" stroke="#6c94cc" stroke-width="1.1"/><path d="M10 0.8v3.5h3.5" fill="#fff" stroke="#6c94cc" stroke-width="1"/></svg>
<span class="t" style="left:357.20px;top:337.88px;">Created</span>
<span class="t c" style="left:420.40px;top:337.88px;">0 %</span>
<svg class="i" style="left:448.00px;top:332.98px" width="10.00" height="10.00" viewBox="0 0 16 16" preserveAspectRatio="none"><circle cx="5" cy="5" r="3.3" fill="#f0b020" stroke="#8a5a00" stroke-width="0.7"/><path d="M0.5 14.5 C0.5 9 9.5 9 9.5 14.5z" fill="#3c64c8" stroke="#203880" stroke-width="0.6"/><circle cx="11.5" cy="5.5" r="3.1" fill="#e05a20" stroke="#702000" stroke-width="0.7"/><path d="M7.5 14.5 C7.5 9.5 15.8 9.5 15.8 14.5z" fill="#38a038" stroke="#1c5c1c" stroke-width="0.6"/></svg>
<div class="cell" style="left:459px;top:331.11px;width:94.7px;height:13.73px;"><span class="t" style="left:1.2px;top:6.77px;font-size:6.65px">Services and facilities (consider</span></div>
<span class="t" style="left:47.00px;top:351.61px;">Lighting/electricity points</span>
<svg class="i" style="left:299.60px;top:346.41px" width="10.60" height="10.60" viewBox="0 0 16 16" preserveAspectRatio="none"><circle cx="8" cy="8" r="7.6" fill="url(#gp)"/><circle cx="8" cy="8" r="3.6" fill="#fff" opacity="0.55"/><circle cx="8" cy="8" r="2.6" fill="#fffaf2"/></svg>
<span class="t" style="left:312.20px;top:351.61px;">Normal</span>
<svg class="i" style="left:345.80px;top:346.61px" width="9.20" height="10.20" viewBox="0 0 16 16" preserveAspectRatio="none"><path d="M2.5 0.8h7.5l3.5 3.5v11H2.5z" fill="url(#gd)" stroke="#6c94cc" stroke-width="1.1"/><path d="M10 0.8v3.5h3.5" fill="#fff" stroke="#6c94cc" stroke-width="1"/></svg>
<span class="t" style="left:357.20px;top:351.61px;">Created</span>
<span class="t c" style="left:420.40px;top:351.61px;">0 %</span>
<svg class="i" style="left:448.00px;top:346.71px" width="10.00" height="10.00" viewBox="0 0 16 16" preserveAspectRatio="none"><circle cx="5" cy="5" r="3.3" fill="#f0b020" stroke="#8a5a00" stroke-width="0.7"/><path d="M0.5 14.5 C0.5 9 9.5 9 9.5 14.5z" fill="#3c64c8" stroke="#203880" stroke-width="0.6"/><circle cx="11.5" cy="5.5" r="3.1" fill="#e05a20" stroke="#702000" stroke-width="0.7"/><path d="M7.5 14.5 C7.5 9.5 15.8 9.5 15.8 14.5z" fill="#38a038" stroke="#1c5c1c" stroke-width="0.6"/></svg>
<div class="cell" style="left:459px;top:344.84px;width:94.7px;height:13.73px;"><span class="t" style="left:1.2px;top:6.77px;font-size:6.65px">Services and facilities (consider</span></div>
<span class="t" style="left:47.00px;top:365.34px;">Air conditioning/ventilation</span>
<svg class="i" style="left:299.60px;top:360.14px" width="10.60" height="10.60" viewBox="0 0 16 16" preserveAspectRatio="none"><circle cx="8" cy="8" r="7.6" fill="url(#gp)"/><circle cx="8" cy="8" r="3.6" fill="#fff" opacity="0.55"/><circle cx="8" cy="8" r="2.6" fill="#fffaf2"/></svg>
<span class="t" style="left:312.20px;top:365.34px;">Normal</span>
<svg class="i" style="left:345.80px;top:360.34px" width="9.20" height="10.20" viewBox="0 0 16 16" preserveAspectRatio="none"><path d="M2.5 0.8h7.5l3.5 3.5v11H2.5z" fill="url(#gd)" stroke="#6c94cc" stroke-width="1.1"/><path d="M10 0.8v3.5h3.5" fill="#fff" stroke="#6c94cc" stroke-width="1"/></svg>
<span class="t" style="left:357.20px;top:365.34px;">Created</span>
<span class="t c" style="left:420.40px;top:365.34px;">0 %</span>
<svg class="i" style="left:448.00px;top:360.44px" width="10.00" height="10.00" viewBox="0 0 16 16" preserveAspectRatio="none"><circle cx="5" cy="5" r="3.3" fill="#f0b020" stroke="#8a5a00" stroke-width="0.7"/><path d="M0.5 14.5 C0.5 9 9.5 9 9.5 14.5z" fill="#3c64c8" stroke="#203880" stroke-width="0.6"/><circle cx="11.5" cy="5.5" r="3.1" fill="#e05a20" stroke="#702000" stroke-width="0.7"/><path d="M7.5 14.5 C7.5 9.5 15.8 9.5 15.8 14.5z" fill="#38a038" stroke="#1c5c1c" stroke-width="0.6"/></svg>
<div class="cell" style="left:459px;top:358.57px;width:94.7px;height:13.73px;"><span class="t" style="left:1.2px;top:6.77px;font-size:6.65px">Services and facilities (consider</span></div>
<span class="t" style="left:47.00px;top:379.07px;">Cooking/refrigeration</span>
<svg class="i" style="left:299.60px;top:373.87px" width="10.60" height="10.60" viewBox="0 0 16 16" preserveAspectRatio="none"><circle cx="8" cy="8" r="7.6" fill="url(#gp)"/><circle cx="8" cy="8" r="3.6" fill="#fff" opacity="0.55"/><circle cx="8" cy="8" r="2.6" fill="#fffaf2"/></svg>
<span class="t" style="left:312.20px;top:379.07px;">Normal</span>
<svg class="i" style="left:345.80px;top:374.07px" width="9.20" height="10.20" viewBox="0 0 16 16" preserveAspectRatio="none"><path d="M2.5 0.8h7.5l3.5 3.5v11H2.5z" fill="url(#gd)" stroke="#6c94cc" stroke-width="1.1"/><path d="M10 0.8v3.5h3.5" fill="#fff" stroke="#6c94cc" stroke-width="1"/></svg>
<span class="t" style="left:357.20px;top:379.07px;">Created</span>
<span class="t c" style="left:420.40px;top:379.07px;">0 %</span>
<svg class="i" style="left:448.00px;top:374.17px" width="10.00" height="10.00" viewBox="0 0 16 16" preserveAspectRatio="none"><circle cx="5" cy="5" r="3.3" fill="#f0b020" stroke="#8a5a00" stroke-width="0.7"/><path d="M0.5 14.5 C0.5 9 9.5 9 9.5 14.5z" fill="#3c64c8" stroke="#203880" stroke-width="0.6"/><circle cx="11.5" cy="5.5" r="3.1" fill="#e05a20" stroke="#702000" stroke-width="0.7"/><path d="M7.5 14.5 C7.5 9.5 15.8 9.5 15.8 14.5z" fill="#38a038" stroke="#1c5c1c" stroke-width="0.6"/></svg>
<div class="cell" style="left:459px;top:372.30px;width:94.7px;height:13.73px;"><span class="t" style="left:1.2px;top:6.77px;font-size:6.65px">Services and facilities (consider</span></div>
<span class="t" style="left:47.00px;top:392.80px;">Computer network</span>
<svg class="i" style="left:299.60px;top:387.60px" width="10.60" height="10.60" viewBox="0 0 16 16" preserveAspectRatio="none"><circle cx="8" cy="8" r="7.6" fill="url(#gp)"/><circle cx="8" cy="8" r="3.6" fill="#fff" opacity="0.55"/><circle cx="8" cy="8" r="2.6" fill="#fffaf2"/></svg>
<span class="t" style="left:312.20px;top:392.80px;">Normal</span>
<svg class="i" style="left:345.80px;top:387.80px" width="9.20" height="10.20" viewBox="0 0 16 16" preserveAspectRatio="none"><path d="M2.5 0.8h7.5l3.5 3.5v11H2.5z" fill="url(#gd)" stroke="#6c94cc" stroke-width="1.1"/><path d="M10 0.8v3.5h3.5" fill="#fff" stroke="#6c94cc" stroke-width="1"/></svg>
<span class="t" style="left:357.20px;top:392.80px;">Created</span>
<span class="t c" style="left:420.40px;top:392.80px;">0 %</span>
<svg class="i" style="left:448.00px;top:387.90px" width="10.00" height="10.00" viewBox="0 0 16 16" preserveAspectRatio="none"><circle cx="5" cy="5" r="3.3" fill="#f0b020" stroke="#8a5a00" stroke-width="0.7"/><path d="M0.5 14.5 C0.5 9 9.5 9 9.5 14.5z" fill="#3c64c8" stroke="#203880" stroke-width="0.6"/><circle cx="11.5" cy="5.5" r="3.1" fill="#e05a20" stroke="#702000" stroke-width="0.7"/><path d="M7.5 14.5 C7.5 9.5 15.8 9.5 15.8 14.5z" fill="#38a038" stroke="#1c5c1c" stroke-width="0.6"/></svg>
<div class="cell" style="left:459px;top:386.04px;width:94.7px;height:13.73px;"><span class="t" style="left:1.2px;top:6.77px;font-size:6.65px">Services and facilities (consider</span></div>
<span class="t" style="left:47.00px;top:406.53px;">Sanitation facilities</span>
<svg class="i" style="left:299.60px;top:401.33px" width="10.60" height="10.60" viewBox="0 0 16 16" preserveAspectRatio="none"><circle cx="8" cy="8" r="7.6" fill="url(#gp)"/><circle cx="8" cy="8" r="3.6" fill="#fff" opacity="0.55"/><circle cx="8" cy="8" r="2.6" fill="#fffaf2"/></svg>
<span class="t" style="left:312.20px;top:406.53px;">Normal</span>
<svg class="i" style="left:345.80px;top:401.53px" width="9.20" height="10.20" viewBox="0 0 16 16" preserveAspectRatio="none"><path d="M2.5 0.8h7.5l3.5 3.5v11H2.5z" fill="url(#gd)" stroke="#6c94cc" stroke-width="1.1"/><path d="M10 0.8v3.5h3.5" fill="#fff" stroke="#6c94cc" stroke-width="1"/></svg>
<span class="t" style="left:357.20px;top:406.53px;">Created</span>
<span class="t c" style="left:420.40px;top:406.53px;">0 %</span>
<svg class="i" style="left:448.00px;top:401.63px" width="10.00" height="10.00" viewBox="0 0 16 16" preserveAspectRatio="none"><circle cx="5" cy="5" r="3.3" fill="#f0b020" stroke="#8a5a00" stroke-width="0.7"/><path d="M0.5 14.5 C0.5 9 9.5 9 9.5 14.5z" fill="#3c64c8" stroke="#203880" stroke-width="0.6"/><circle cx="11.5" cy="5.5" r="3.1" fill="#e05a20" stroke="#702000" stroke-width="0.7"/><path d="M7.5 14.5 C7.5 9.5 15.8 9.5 15.8 14.5z" fill="#38a038" stroke="#1c5c1c" stroke-width="0.6"/></svg>
<div class="cell" style="left:459px;top:399.77px;width:94.7px;height:13.73px;"><span class="t" style="left:1.2px;top:6.77px;font-size:6.65px">Services and facilities (consider</span></div>
<div style="left:0.00px;top:262.45px;width:11.20px;height:151.05px;background:#d4d0c8;border-right:0.7px solid #a4a29c;"></div>
<div style="left:0.00px;top:413.50px;width:626.60px;height:11.50px;background:#d4d0c8;border-bottom:0.7px solid #a4a29c;"></div>
<div style="left:3.50px;top:416.20px;width:6.70px;height:6.70px;background:#f4f6fc;border:0.7px solid #7c94c4;border-radius:0.8px;"></div>
<div style="left:5.20px;top:419.20px;width:3.30px;height:0.75px;background:#2c448c;"></div>
<span class="t" style="left:12.80px;top:419.35px;">Category: Consider costs</span>
<span class="t" style="left:47.00px;top:431.73px;">Research if the rent is per sq. m</span>
<svg class="i" style="left:299.60px;top:426.53px" width="10.60" height="10.60" viewBox="0 0 16 16" preserveAspectRatio="none"><circle cx="8" cy="8" r="7.6" fill="url(#gp)"/><circle cx="8" cy="8" r="3.6" fill="#fff" opacity="0.55"/><circle cx="8" cy="8" r="2.6" fill="#fffaf2"/></svg>
<span class="t" style="left:312.20px;top:431.73px;">Normal</span>
<svg class="i" style="left:345.80px;top:426.73px" width="9.20" height="10.20" viewBox="0 0 16 16" preserveAspectRatio="none"><path d="M2.5 0.8h7.5l3.5 3.5v11H2.5z" fill="url(#gd)" stroke="#6c94cc" stroke-width="1.1"/><path d="M10 0.8v3.5h3.5" fill="#fff" stroke="#6c94cc" stroke-width="1"/></svg>
<span class="t" style="left:357.20px;top:431.73px;">Created</span>
<span class="t c" style="left:420.40px;top:431.73px;">0 %</span>
<svg class="i" style="left:448.00px;top:426.83px" width="10.00" height="10.00" viewBox="0 0 16 16" preserveAspectRatio="none"><rect x="2" y="1" width="12" height="10.5" rx="1.5" fill="#2c8ce0" stroke="#1c5ca0" stroke-width="1"/><rect x="4" y="3" width="8" height="6" fill="#7cd0ff"/><path d="M6 12h4l1.5 3h-7z" fill="#9aa4b0" stroke="#5c6670" stroke-width="0.6"/></svg>
<div class="cell" style="left:459px;top:425.00px;width:94.7px;height:13.67px;"><span class="t" style="left:1.2px;top:6.73px;font-size:6.65px">Consider costs</span></div>
<span class="t" style="left:47.00px;top:445.40px;">Research if the rates are per sq. m</span>
<svg class="i" style="left:299.60px;top:440.20px" width="10.60" height="10.60" viewBox="0 0 16 16" preserveAspectRatio="none"><circle cx="8" cy="8" r="7.6" fill="url(#gp)"/><circle cx="8" cy="8" r="3.6" fill="#fff" opacity="0.55"/><circle cx="8" cy="8" r="2.6" fill="#fffaf2"/></svg>
<span class="t" style="left:312.20px;top:445.40px;">Normal</span>
<svg class="i" style="left:345.80px;top:440.40px" width="9.20" height="10.20" viewBox="0 0 16 16" preserveAspectRatio="none"><path d="M2.5 0.8h7.5l3.5 3.5v11H2.5z" fill="url(#gd)" stroke="#6c94cc" stroke-width="1.1"/><path d="M10 0.8v3.5h3.5" fill="#fff" stroke="#6c94cc" stroke-width="1"/></svg>
<span class="t" style="left:357.20px;top:445.40px;">Created</span>
<span class="t c" style="left:420.40px;top:445.40px;">0 %</span>
<svg class="i" style="left:448.00px;top:440.50px" width="10.00" height="10.00" viewBox="0 0 16 16" preserveAspectRatio="none"><rect x="2" y="1" width="12" height="10.5" rx="1.5" fill="#2c8ce0" stroke="#1c5ca0" stroke-width="1"/><rect x="4" y="3" width="8" height="6" fill="#7cd0ff"/><path d="M6 12h4l1.5 3h-7z" fill="#9aa4b0" stroke="#5c6670" stroke-width="0.6"/></svg>
<div class="cell" style="left:459px;top:438.67px;width:94.7px;height:13.67px;"><span class="t" style="left:1.2px;top:6.73px;font-size:6.65px">Consider costs</span></div>
<span class="t" style="left:47.00px;top:459.07px;">Research maintenance costs</span>
<svg class="i" style="left:299.60px;top:453.87px" width="10.60" height="10.60" viewBox="0 0 16 16" preserveAspectRatio="none"><circle cx="8" cy="8" r="7.6" fill="url(#gp)"/><circle cx="8" cy="8" r="3.6" fill="#fff" opacity="0.55"/><circle cx="8" cy="8" r="2.6" fill="#fffaf2"/></svg>
<span class="t" style="left:312.20px;top:459.07px;">Normal</span>
<svg class="i" style="left:345.80px;top:454.07px" width="9.20" height="10.20" viewBox="0 0 16 16" preserveAspectRatio="none"><path d="M2.5 0.8h7.5l3.5 3.5v11H2.5z" fill="url(#gd)" stroke="#6c94cc" stroke-width="1.1"/><path d="M10 0.8v3.5h3.5" fill="#fff" stroke="#6c94cc" stroke-width="1"/></svg>
<span class="t" style="left:357.20px;top:459.07px;">Created</span>
<span class="t c" style="left:420.40px;top:459.07px;">0 %</span>
<svg class="i" style="left:448.00px;top:454.17px" width="10.00" height="10.00" viewBox="0 0 16 16" preserveAspectRatio="none"><rect x="2" y="1" width="12" height="10.5" rx="1.5" fill="#2c8ce0" stroke="#1c5ca0" stroke-width="1"/><rect x="4" y="3" width="8" height="6" fill="#7cd0ff"/><path d="M6 12h4l1.5 3h-7z" fill="#9aa4b0" stroke="#5c6670" stroke-width="0.6"/></svg>
<div class="cell" style="left:459px;top:452.33px;width:94.7px;height:13.67px;"><span class="t" style="left:1.2px;top:6.73px;font-size:6.65px">Consider costs</span></div>
<span class="t" style="left:47.00px;top:472.73px;">Research running costs (phones, electricity, security, etc.)</span>
<svg class="i" style="left:299.60px;top:467.53px" width="10.60" height="10.60" viewBox="0 0 16 16" preserveAspectRatio="none"><circle cx="8" cy="8" r="7.6" fill="url(#gp)"/><circle cx="8" cy="8" r="3.6" fill="#fff" opacity="0.55"/><circle cx="8" cy="8" r="2.6" fill="#fffaf2"/></svg>
<span class="t" style="left:312.20px;top:472.73px;">Normal</span>
<svg class="i" style="left:345.80px;top:467.73px" width="9.20" height="10.20" viewBox="0 0 16 16" preserveAspectRatio="none"><path d="M2.5 0.8h7.5l3.5 3.5v11H2.5z" fill="url(#gd)" stroke="#6c94cc" stroke-width="1.1"/><path d="M10 0.8v3.5h3.5" fill="#fff" stroke="#6c94cc" stroke-width="1"/></svg>
<span class="t" style="left:357.20px;top:472.73px;">Created</span>
<span class="t c" style="left:420.40px;top:472.73px;">0 %</span>
<svg class="i" style="left:448.00px;top:467.83px" width="10.00" height="10.00" viewBox="0 0 16 16" preserveAspectRatio="none"><rect x="2" y="1" width="12" height="10.5" rx="1.5" fill="#2c8ce0" stroke="#1c5ca0" stroke-width="1"/><rect x="4" y="3" width="8" height="6" fill="#7cd0ff"/><path d="M6 12h4l1.5 3h-7z" fill="#9aa4b0" stroke="#5c6670" stroke-width="0.6"/></svg>
<div class="cell" style="left:459px;top:466.00px;width:94.7px;height:13.67px;"><span class="t" style="left:1.2px;top:6.73px;font-size:6.65px">Consider costs</span></div>
<span class="t" style="left:47.00px;top:486.40px;">Research if there is a premium for getting in</span>
<svg class="i" style="left:299.60px;top:481.20px" width="10.60" height="10.60" viewBox="0 0 16 16" preserveAspectRatio="none"><circle cx="8" cy="8" r="7.6" fill="url(#gp)"/><circle cx="8" cy="8" r="3.6" fill="#fff" opacity="0.55"/><circle cx="8" cy="8" r="2.6" fill="#fffaf2"/></svg>
<span class="t" style="left:312.20px;top:486.40px;">Normal</span>
<svg class="i" style="left:345.80px;top:481.40px" width="9.20" height="10.20" viewBox="0 0 16 16" preserveAspectRatio="none"><path d="M2.5 0.8h7.5l3.5 3.5v11H2.5z" fill="url(#gd)" stroke="#6c94cc" stroke-width="1.1"/><path d="M10 0.8v3.5h3.5" fill="#fff" stroke="#6c94cc" stroke-width="1"/></svg>
<span class="t" style="left:357.20px;top:486.40px;">Created</span>
<span class="t c" style="left:420.40px;top:486.40px;">0 %</span>
<svg class="i" style="left:448.00px;top:481.50px" width="10.00" height="10.00" viewBox="0 0 16 16" preserveAspectRatio="none"><rect x="2" y="1" width="12" height="10.5" rx="1.5" fill="#2c8ce0" stroke="#1c5ca0" stroke-width="1"/><rect x="4" y="3" width="8" height="6" fill="#7cd0ff"/><path d="M6 12h4l1.5 3h-7z" fill="#9aa4b0" stroke="#5c6670" stroke-width="0.6"/></svg>
<div class="cell" style="left:459px;top:479.67px;width:94.7px;height:13.67px;"><span class="t" style="left:1.2px;top:6.73px;font-size:6.65px">Consider costs</span></div>
<span class="t" style="left:47.00px;top:500.07px;">Research if any rent-free period is offered</span>
<svg class="i" style="left:299.60px;top:494.87px" width="10.60" height="10.60" viewBox="0 0 16 16" preserveAspectRatio="none"><circle cx="8" cy="8" r="7.6" fill="url(#gp)"/><circle cx="8" cy="8" r="3.6" fill="#fff" opacity="0.55"/><circle cx="8" cy="8" r="2.6" fill="#fffaf2"/></svg>
<span class="t" style="left:312.20px;top:500.07px;">Normal</span>
<svg class="i" style="left:345.80px;top:495.07px" width="9.20" height="10.20" viewBox="0 0 16 16" preserveAspectRatio="none"><path d="M2.5 0.8h7.5l3.5 3.5v11H2.5z" fill="url(#gd)" stroke="#6c94cc" stroke-width="1.1"/><path d="M10 0.8v3.5h3.5" fill="#fff" stroke="#6c94cc" stroke-width="1"/></svg>
<span class="t" style="left:357.20px;top:500.07px;">Created</span>
<span class="t c" style="left:420.40px;top:500.07px;">0 %</span>
<svg class="i" style="left:448.00px;top:495.17px" width="10.00" height="10.00" viewBox="0 0 16 16" preserveAspectRatio="none"><rect x="2" y="1" width="12" height="10.5" rx="1.5" fill="#2c8ce0" stroke="#1c5ca0" stroke-width="1"/><rect x="4" y="3" width="8" height="6" fill="#7cd0ff"/><path d="M6 12h4l1.5 3h-7z" fill="#9aa4b0" stroke="#5c6670" stroke-width="0.6"/></svg>
<div class="cell" style="left:459px;top:493.33px;width:94.7px;height:13.67px;"><span class="t" style="left:1.2px;top:6.73px;font-size:6.65px">Consider costs</span></div>
<div style="left:0.00px;top:425.00px;width:11.20px;height:82.00px;background:#d4d0c8;border-right:0.7px solid #a4a29c;"></div>
<svg class="i" style="left:0;top:0" width="800" height="611" viewBox="0 0 800 611"><rect x="25.45" y="92.51" width="6.2" height="6.1" fill="#fff" stroke="#2c2c2c" stroke-width="0.9"/><rect x="11.2" y="101.92" width="615.40" height="0.8" fill="#b6b4ae"/><rect x="25.45" y="106.22" width="6.2" height="6.1" fill="#fff" stroke="#2c2c2c" stroke-width="0.9"/><rect x="11.2" y="115.63" width="615.40" height="0.8" fill="#b6b4ae"/><rect x="25.45" y="119.94" width="6.2" height="6.1" fill="#fff" stroke="#2c2c2c" stroke-width="0.9"/><rect x="11.2" y="129.35" width="615.40" height="0.8" fill="#b6b4ae"/><rect x="25.45" y="133.66" width="6.2" height="6.1" fill="#fff" stroke="#2c2c2c" stroke-width="0.9"/><rect x="11.2" y="143.07" width="615.40" height="0.8" fill="#b6b4ae"/><rect x="25.45" y="147.38" width="6.2" height="6.1" fill="#fff" stroke="#2c2c2c" stroke-width="0.9"/><rect x="11.2" y="156.78" width="615.40" height="0.8" fill="#b6b4ae"/><rect x="25.45" y="161.09" width="6.2" height="6.1" fill="#fff" stroke="#2c2c2c" stroke-width="0.9"/><rect x="11.2" y="170.50" width="615.40" height="0.8" fill="#b6b4ae"/><rect x="45.00" y="88.60" width="0.8" height="82.30" fill="#b6b4ae"/><rect x="297.00" y="88.60" width="0.8" height="82.30" fill="#b6b4ae"/><rect x="342.00" y="88.60" width="0.8" height="82.30" fill="#b6b4ae"/><rect x="394.00" y="88.60" width="0.8" height="82.30" fill="#b6b4ae"/><rect x="445.40" y="88.60" width="0.8" height="82.30" fill="#b6b4ae"/><rect x="556.00" y="88.60" width="0.8" height="82.30" fill="#b6b4ae"/><rect x="25.45" y="186.39" width="6.2" height="6.1" fill="#fff" stroke="#2c2c2c" stroke-width="0.9"/><rect x="11.2" y="195.78" width="615.40" height="0.8" fill="#b6b4ae"/><rect x="25.45" y="200.07" width="6.2" height="6.1" fill="#fff" stroke="#2c2c2c" stroke-width="0.9"/><rect x="11.2" y="209.46" width="615.40" height="0.8" fill="#b6b4ae"/><rect x="25.45" y="213.75" width="6.2" height="6.1" fill="#fff" stroke="#2c2c2c" stroke-width="0.9"/><rect x="11.2" y="223.14" width="615.40" height="0.8" fill="#b6b4ae"/><rect x="25.45" y="227.43" width="6.2" height="6.1" fill="#fff" stroke="#2c2c2c" stroke-width="0.9"/><rect x="11.2" y="236.82" width="615.40" height="0.8" fill="#b6b4ae"/><rect x="25.45" y="241.11" width="6.2" height="6.1" fill="#fff" stroke="#2c2c2c" stroke-width="0.9"/><rect x="11.2" y="250.50" width="615.40" height="0.8" fill="#b6b4ae"/><rect x="45.00" y="182.50" width="0.8" height="68.40" fill="#b6b4ae"/><rect x="297.00" y="182.50" width="0.8" height="68.40" fill="#b6b4ae"/><rect x="342.00" y="182.50" width="0.8" height="68.40" fill="#b6b4ae"/><rect x="394.00" y="182.50" width="0.8" height="68.40" fill="#b6b4ae"/><rect x="445.40" y="182.50" width="0.8" height="68.40" fill="#b6b4ae"/><rect x="556.00" y="182.50" width="0.8" height="68.40" fill="#b6b4ae"/><rect x="25.45" y="266.37" width="6.2" height="6.1" fill="#fff" stroke="#2c2c2c" stroke-width="0.9"/><rect x="11.2" y="275.78" width="615.40" height="0.8" fill="#b6b4ae"/><rect x="25.45" y="280.10" width="6.2" height="6.1" fill="#fff" stroke="#2c2c2c" stroke-width="0.9"/><rect x="11.2" y="289.51" width="615.40" height="0.8" fill="#b6b4ae"/><rect x="25.45" y="293.83" width="6.2" height="6.1" fill="#fff" stroke="#2c2c2c" stroke-width="0.9"/><rect x="11.2" y="303.25" width="615.40" height="0.8" fill="#b6b4ae"/><rect x="25.45" y="307.56" width="6.2" height="6.1" fill="#fff" stroke="#2c2c2c" stroke-width="0.9"/><rect x="11.2" y="316.98" width="615.40" height="0.8" fill="#b6b4ae"/><rect x="25.45" y="321.29" width="6.2" height="6.1" fill="#fff" stroke="#2c2c2c" stroke-width="0.9"/><rect x="11.2" y="330.71" width="615.40" height="0.8" fill="#b6b4ae"/><rect x="25.45" y="335.03" width="6.2" height="6.1" fill="#fff" stroke="#2c2c2c" stroke-width="0.9"/><rect x="11.2" y="344.44" width="615.40" height="0.8" fill="#b6b4ae"/><rect x="25.45" y="348.76" width="6.2" height="6.1" fill="#fff" stroke="#2c2c2c" stroke-width="0.9"/><rect x="11.2" y="358.17" width="615.40" height="0.8" fill="#b6b4ae"/><rect x="25.45" y="362.49" width="6.2" height="6.1" fill="#fff" stroke="#2c2c2c" stroke-width="0.9"/><rect x="11.2" y="371.90" width="615.40" height="0.8" fill="#b6b4ae"/><rect x="25.45" y="376.22" width="6.2" height="6.1" fill="#fff" stroke="#2c2c2c" stroke-width="0.9"/><rect x="11.2" y="385.64" width="615.40" height="0.8" fill="#b6b4ae"/><rect x="25.45" y="389.95" width="6.2" height="6.1" fill="#fff" stroke="#2c2c2c" stroke-width="0.9"/><rect x="11.2" y="399.37" width="615.40" height="0.8" fill="#b6b4ae"/><rect x="25.45" y="403.68" width="6.2" height="6.1" fill="#fff" stroke="#2c2c2c" stroke-width="0.9"/><rect x="11.2" y="413.10" width="615.40" height="0.8" fill="#b6b4ae"/><rect x="45.00" y="262.45" width="0.8" height="151.05" fill="#b6b4ae"/><rect x="297.00" y="262.45" width="0.8" height="151.05" fill="#b6b4ae"/><rect x="342.00" y="262.45" width="0.8" height="151.05" fill="#b6b4ae"/><rect x="394.00" y="262.45" width="0.8" height="151.05" fill="#b6b4ae"/><rect x="445.40" y="262.45" width="0.8" height="151.05" fill="#b6b4ae"/><rect x="556.00" y="262.45" width="0.8" height="151.05" fill="#b6b4ae"/><rect x="25.45" y="428.88" width="6.2" height="6.1" fill="#fff" stroke="#2c2c2c" stroke-width="0.9"/><rect x="11.2" y="438.27" width="615.40" height="0.8" fill="#b6b4ae"/><rect x="25.45" y="442.55" width="6.2" height="6.1" fill="#fff" stroke="#2c2c2c" stroke-width="0.9"/><rect x="11.2" y="451.93" width="615.40" height="0.8" fill="#b6b4ae"/><rect x="25.45" y="456.22" width="6.2" height="6.1" fill="#fff" stroke="#2c2c2c" stroke-width="0.9"/><rect x="11.2" y="465.60" width="615.40" height="0.8" fill="#b6b4ae"/><rect x="25.45" y="469.88" width="6.2" height="6.1" fill="#fff" stroke="#2c2c2c" stroke-width="0.9"/><rect x="11.2" y="479.27" width="615.40" height="0.8" fill="#b6b4ae"/><rect x="25.45" y="483.55" width="6.2" height="6.1" fill="#fff" stroke="#2c2c2c" stroke-width="0.9"/><rect x="11.2" y="492.93" width="615.40" height="0.8" fill="#b6b4ae"/><rect x="25.45" y="497.22" width="6.2" height="6.1" fill="#fff" stroke="#2c2c2c" stroke-width="0.9"/><rect x="11.2" y="506.60" width="615.40" height="0.8" fill="#b6b4ae"/><rect x="45.00" y="425.00" width="0.8" height="82.00" fill="#b6b4ae"/><rect x="297.00" y="425.00" width="0.8" height="82.00" fill="#b6b4ae"/><rect x="342.00" y="425.00" width="0.8" height="82.00" fill="#b6b4ae"/><rect x="394.00" y="425.00" width="0.8" height="82.00" fill="#b6b4ae"/><rect x="445.40" y="425.00" width="0.8" height="82.00" fill="#b6b4ae"/><rect x="556.00" y="425.00" width="0.8" height="82.00" fill="#b6b4ae"/></svg>
<div style="left:0.00px;top:65.60px;width:626.60px;height:11.90px;background:#e8e6e1;border-bottom:0.9px solid #a4a29c;border-top:0.6px solid #f8f8f6;"></div>
<div style="left:45.00px;top:66.80px;width:0.70px;height:9.30px;background:#b4b2ac;"></div>
<div style="left:45.70px;top:66.80px;width:0.60px;height:9.30px;background:#fbfbfa;"></div>
<div style="left:297.00px;top:66.80px;width:0.70px;height:9.30px;background:#b4b2ac;"></div>
<div style="left:297.70px;top:66.80px;width:0.60px;height:9.30px;background:#fbfbfa;"></div>
<div style="left:342.00px;top:66.80px;width:0.70px;height:9.30px;background:#b4b2ac;"></div>
<div style="left:342.70px;top:66.80px;width:0.60px;height:9.30px;background:#fbfbfa;"></div>
<div style="left:394.00px;top:66.80px;width:0.70px;height:9.30px;background:#b4b2ac;"></div>
<div style="left:394.70px;top:66.80px;width:0.60px;height:9.30px;background:#fbfbfa;"></div>
<div style="left:445.40px;top:66.80px;width:0.70px;height:9.30px;background:#b4b2ac;"></div>
<div style="left:446.10px;top:66.80px;width:0.60px;height:9.30px;background:#fbfbfa;"></div>
<div style="left:556.00px;top:66.80px;width:0.70px;height:9.30px;background:#b4b2ac;"></div>
<div style="left:556.70px;top:66.80px;width:0.60px;height:9.30px;background:#fbfbfa;"></div>
<span class="t c" style="left:23.00px;top:71.95px;">Done</span>
<span class="t c" style="left:171.40px;top:71.95px;">Name</span>
<span class="t" style="left:303.60px;top:71.95px;">Priority</span>
<span class="t" style="left:352.90px;top:71.95px;">Status</span>
<span class="t c" style="left:420.00px;top:71.95px;">Complete</span>
<span class="t c" style="left:495.50px;top:71.95px;">Category</span>
<span class="t c" style="left:597.00px;top:71.95px;">Info</span>
<div style="left:332.20px;top:68.00px;width:9.00px;height:8.00px;background:#d4d0c8;border:1px solid;border-color:#f4f4f2 #9c9a94 #9c9a94 #f4f4f2;"></div>
<svg class="i" style="left:334.50px;top:70.90px" width="4.40" height="2.50" viewBox="0 0 16 16" preserveAspectRatio="none"><path d="M0 0h16L8 16z" fill="#000"/></svg>
<div style="left:384.20px;top:68.00px;width:9.00px;height:8.00px;background:#d4d0c8;border:1px solid;border-color:#f4f4f2 #9c9a94 #9c9a94 #f4f4f2;"></div>
<svg class="i" style="left:386.50px;top:70.90px" width="4.40" height="2.50" viewBox="0 0 16 16" preserveAspectRatio="none"><path d="M0 0h16L8 16z" fill="#000"/></svg>
<svg class="i" style="left:548.00px;top:69.00px" width="5.20" height="5.00" viewBox="0 0 16 16" preserveAspectRatio="none"><path d="M1 15L8 1l7 14" fill="none" stroke="#a0a0a0" stroke-width="1.6"/><path d="M8 1l7 14H1" fill="none" stroke="#fff" stroke-width="1.2"/></svg>
<svg class="i" style="left:558.40px;top:66.90px" width="10.60" height="10.20" viewBox="0 0 16 16" preserveAspectRatio="none"><path d="M8 0.5L15.5 8 8 15.5 0.5 8z" fill="#f6f9ff" stroke="#b0c2ec" stroke-width="1.4"/><ellipse cx="8" cy="8" rx="5" ry="4.6" fill="#2450b8"/><rect x="7.1" y="6.6" width="1.9" height="4.4" fill="#fff"/><circle cx="8" cy="5" r="1.1" fill="#fff"/></svg>
<div style="left:626.10px;top:77.50px;width:0.80px;height:429.50px;background:#b6b4ae;"></div>
<div style="left:0.00px;top:592.20px;width:628.00px;height:14.80px;background:#d4d0c8;border-top:0.6px solid #f4f4f2;"></div>
<div style="left:47.00px;top:594.20px;width:250.20px;height:11.40px;background:#e8e6e1;border:1px solid;border-color:#aeaca6 #f4f4f2 #f4f4f2 #aeaca6;"></div>
<span class="t" style="left:49.20px;top:600.00px;">Count: 28</span>
<div style="left:0.00px;top:43.20px;width:0.80px;height:564.00px;background:#a4a29e;"></div>
<div style="left:0.00px;top:607.00px;width:800.00px;height:4.00px;background:linear-gradient(180deg,#cccac4 0 1px,#a8a6a2 1px 2px,#b8b6b2 2px 3px,#c4c2bd 3px 4px);"></div>
<div style="left:627.00px;top:43.20px;width:173.00px;height:564.40px;background:#e6e4de;"></div>
<div style="left:626.00px;top:43.20px;width:1.00px;height:564.40px;background:#c8c6c0;"></div>
<div style="left:627.00px;top:43.20px;width:2.00px;height:564.40px;background:#a4a29e;"></div>
<div style="left:628.00px;top:73.00px;width:1.00px;height:225.00px;background:#828280;"></div>
<div style="left:628.00px;top:328.00px;width:2.00px;height:279.00px;background:#828280;"></div>
<div style="left:798.00px;top:43.20px;width:2.00px;height:564.40px;background:#8e8c8a;"></div>
<div style="left:627.00px;top:606.00px;width:173.00px;height:2.00px;background:#848482;"></div>
<div style="left:627.00px;top:608.00px;width:173.00px;height:3.00px;background:#a8a8a5;"></div>
<div style="left:629.40px;top:44.50px;width:169.00px;height:10.20px;background:#d6d3cb;border:1px solid #b4b2ac;"></div>
<span class="t" style="left:631.00px;top:49.50px;">Categories Bar</span>
<svg class="i" style="left:772.40px;top:48.90px" width="4.80" height="2.80" viewBox="0 0 16 16" preserveAspectRatio="none"><path d="M0 16h16L8 0z" fill="#000"/></svg>
<svg class="i" style="left:781.40px;top:46.90px" width="4.80" height="5.60" viewBox="0 0 16 16" preserveAspectRatio="none"><path d="M3 1h9v10H3z" fill="#fff" stroke="#000" stroke-width="1.6"/><path d="M9.5 1v10" stroke="#000" stroke-width="3.4"/><path d="M0.5 11.6h15" stroke="#000" stroke-width="1.6"/><path d="M7.5 12v4" stroke="#000" stroke-width="1.6"/></svg>
<svg class="i" style="left:790.60px;top:47.70px" width="4.60" height="4.40" viewBox="0 0 16 16" preserveAspectRatio="none"><path d="M2 2l12 12M14 2L2 14" stroke="#505050" stroke-width="2"/></svg>
<div style="left:629.00px;top:55.40px;width:169.00px;height:17.20px;background:#efeeea;"></div>
<div style="left:630.40px;top:56.20px;width:63.60px;height:15.40px;background:linear-gradient(180deg,#fbfbfa 0%,#f0efec 50%,#dcdad4 100%);border-radius:1.5px 0 0 1.5px;"></div>
<div style="left:694.00px;top:56.20px;width:6.30px;height:15.40px;background:linear-gradient(180deg,#d0cec8 0%,#8e8c88 60%,#6e6c68 100%);border-radius:0 2px 2px 0;"></div>
<div style="left:695.60px;top:65.80px;width:3.00px;height:0.90px;background:#fff;"></div>
<div style="left:695.90px;top:66.10px;width:3.00px;height:0.90px;background:#000;"></div>
<svg class="i" style="left:695.90px;top:67.60px" width="3.40" height="2.20" viewBox="0 0 16 16" preserveAspectRatio="none"><path d="M0 0h16L8 16z" fill="#000"/></svg>
<div style="left:632.60px;top:59.20px;width:1.00px;height:9.40px;background:repeating-linear-gradient(180deg,#a8a6a0 0 1px,transparent 1px 2.5px);"></div>
<svg class="i" style="left:636.90px;top:59.20px" width="10.20" height="9.80" viewBox="0 0 16 16" preserveAspectRatio="none"><rect x="1.5" y="4" width="12" height="10" fill="#fff" stroke="#7c9cd8" stroke-width="0.9"/><rect x="1.2" y="3.6" width="12.6" height="2.8" fill="#4c7cd8"/><rect x="1.2" y="13" width="12.6" height="1.8" fill="#2c54b0"/><path d="M9 2.5h4V0l3 3.2-3 3.2V4H9z" fill="#189818"/></svg>
<svg class="i" style="left:651.20px;top:59.20px" width="10.20" height="9.80" viewBox="0 0 16 16" preserveAspectRatio="none"><path d="M3 3v11M3 6h4M3 10h4M3 14h4" stroke="#2c54b0" stroke-width="1.3" fill="none"/><rect x="1" y="1" width="4" height="3.4" fill="#2c54b0"/><rect x="7" y="4.4" width="4" height="3.2" fill="#2c54b0"/><rect x="7" y="8.4" width="4" height="3.2" fill="#2c54b0"/><rect x="7" y="12.4" width="4" height="3.2" fill="#2c54b0"/><path d="M12.5 0v6M9.5 3h6" stroke="#189818" stroke-width="1.8"/></svg>
<svg class="i" style="left:665.80px;top:59.20px" width="10.20" height="9.80" viewBox="0 0 16 16" preserveAspectRatio="none"><rect x="1.5" y="4" width="12" height="10" fill="#fff" stroke="#7c9cd8" stroke-width="0.9"/><rect x="1.2" y="3.6" width="12.6" height="2.8" fill="#4c7cd8"/><rect x="1.2" y="13" width="12.6" height="1.8" fill="#2c54b0"/><path d="M14.5 1L7 10l-1 3 3-1 7.5-9z" fill="#e8a020" stroke="#805000" stroke-width="0.6"/></svg>
<svg class="i" style="left:680.20px;top:59.20px" width="10.20" height="9.80" viewBox="0 0 16 16" preserveAspectRatio="none"><rect x="1.5" y="4" width="12" height="10" fill="#fff" stroke="#7c9cd8" stroke-width="0.9"/><rect x="1.2" y="3.6" width="12.6" height="2.8" fill="#4c7cd8"/><rect x="1.2" y="13" width="12.6" height="1.8" fill="#2c54b0"/><path d="M8 8l7 7M15 8l-7 7" stroke="#d82020" stroke-width="1.8"/></svg>
<div style="left:629.00px;top:73.60px;width:169.00px;height:222.40px;background:#fff;"></div>
<div style="left:629.00px;top:73.60px;width:169.00px;height:10.60px;background:#e8e6e1;border-bottom:0.8px solid #a8a6a0;"></div>
<div style="left:752.60px;top:74.60px;width:0.70px;height:8.40px;background:#a8a6a0;"></div>
<div style="left:753.30px;top:74.60px;width:0.60px;height:8.40px;background:#fff;"></div>
<div style="left:778.40px;top:74.60px;width:0.70px;height:8.40px;background:#a8a6a0;"></div>
<div style="left:779.10px;top:74.60px;width:0.60px;height:8.40px;background:#fff;"></div>
<span class="t" style="left:755.20px;top:78.80px;">UnD...</span>
<span class="t" style="left:780.80px;top:78.80px;">Total</span>
<div style="left:752.80px;top:85.60px;width:45.60px;height:10.40px;background:#d4d0c8;"></div>
<div style="left:641.40px;top:85.40px;width:157.00px;height:10.60px;border:0.8px solid #404040;"></div>
<div style="left:635.00px;top:90.20px;width:1.00px;height:45.00px;background:#c4c4c4;"></div>
<div style="left:635.00px;top:89.70px;width:5.60px;height:1.00px;background:#c4c4c4;"></div>
<svg class="i" style="left:643.00px;top:85.40px" width="10.00" height="9.80" viewBox="0 0 16 16" preserveAspectRatio="none"><path d="M1 3.5 L6.5 6 L7 13.5 L2.5 11z" fill="#fff" stroke="#d08850" stroke-width="1.1"/><path d="M15 3.5 L9.5 6 L9 13.5 L13.5 11z" fill="#fff" stroke="#d08850" stroke-width="1.1"/><path d="M8 7.5 v6.5" stroke="#6c8cd8" stroke-width="2"/><circle cx="8" cy="7" r="1.6" fill="#88a8e8"/></svg>
<span class="t" style="left:655.30px;top:90.10px;font-size:6.7px;">My Tasks</span>
<div style="left:635.00px;top:100.95px;width:5.60px;height:1.00px;background:#c4c4c4;"></div>
<svg class="i" style="left:643.00px;top:96.65px" width="10.00" height="9.80" viewBox="0 0 16 16" preserveAspectRatio="none"><path d="M1 3.5 L6.5 6 L7 13.5 L2.5 11z" fill="#fff" stroke="#d08850" stroke-width="1.1"/><path d="M15 3.5 L9.5 6 L9 13.5 L13.5 11z" fill="#fff" stroke="#d08850" stroke-width="1.1"/><path d="M8 7.5 v6.5" stroke="#6c8cd8" stroke-width="2"/><circle cx="8" cy="7" r="1.6" fill="#88a8e8"/></svg>
<span class="t" style="left:655.30px;top:101.35px;font-size:6.7px;">Space and working environment</span>
<span class="t r" style="left:777.60px;top:101.35px;">6</span>
<span class="t r" style="left:796.60px;top:101.35px;">6</span>
<div style="left:635.00px;top:112.20px;width:5.60px;height:1.00px;background:#c4c4c4;"></div>
<svg class="i" style="left:643.00px;top:107.90px" width="10.00" height="9.80" viewBox="0 0 16 16" preserveAspectRatio="none"><path d="M2 0.8v15" stroke="#282868" stroke-width="1.7"/><path d="M3 1.8 C6 0.3 8 3.8 14 1.8 V9.6 C8 11.6 6 8.1 3 9.6z" fill="#3c48c4" stroke="#20287c" stroke-width="0.8"/><path d="M4.6 2.2v6.6" stroke="#c8d4f8" stroke-width="1.5"/><path d="M9.5 3.4v6.4" stroke="#7c8ce0" stroke-width="1.4"/></svg>
<span class="t" style="left:655.30px;top:112.60px;font-size:6.7px;">Easiness of access</span>
<span class="t r" style="left:777.60px;top:112.60px;">5</span>
<span class="t r" style="left:796.60px;top:112.60px;">5</span>
<div style="left:635.00px;top:123.45px;width:5.60px;height:1.00px;background:#c4c4c4;"></div>
<svg class="i" style="left:643.00px;top:119.15px" width="10.00" height="9.80" viewBox="0 0 16 16" preserveAspectRatio="none"><circle cx="5" cy="5" r="3.3" fill="#f0b020" stroke="#8a5a00" stroke-width="0.7"/><path d="M0.5 14.5 C0.5 9 9.5 9 9.5 14.5z" fill="#3c64c8" stroke="#203880" stroke-width="0.6"/><circle cx="11.5" cy="5.5" r="3.1" fill="#e05a20" stroke="#702000" stroke-width="0.7"/><path d="M7.5 14.5 C7.5 9.5 15.8 9.5 15.8 14.5z" fill="#38a038" stroke="#1c5c1c" stroke-width="0.6"/></svg>
<span class="t" style="left:655.30px;top:123.85px;font-size:6.7px;">Services and facilities (consider</span>
<span class="t r" style="left:777.60px;top:123.85px;">11</span>
<span class="t r" style="left:796.60px;top:123.85px;">11</span>
<div style="left:635.00px;top:134.70px;width:5.60px;height:1.00px;background:#c4c4c4;"></div>
<svg class="i" style="left:643.00px;top:130.40px" width="10.00" height="9.80" viewBox="0 0 16 16" preserveAspectRatio="none"><rect x="2" y="1" width="12" height="10.5" rx="1.5" fill="#2c8ce0" stroke="#1c5ca0" stroke-width="1"/><rect x="4" y="3" width="8" height="6" fill="#7cd0ff"/><path d="M6 12h4l1.5 3h-7z" fill="#9aa4b0" stroke="#5c6670" stroke-width="0.6"/></svg>
<span class="t" style="left:655.30px;top:135.10px;font-size:6.7px;">Consider costs</span>
<span class="t r" style="left:777.60px;top:135.10px;">6</span>
<span class="t r" style="left:796.60px;top:135.10px;">6</span>
<div style="left:629.00px;top:296.00px;width:169.00px;height:2.00px;background:#848482;"></div>
<div style="left:629.00px;top:298.00px;width:169.00px;height:2.00px;background:#d4d0c8;"></div>
<div style="left:629.40px;top:299.40px;width:169.00px;height:10.20px;background:#d6d3cb;border:1px solid #b4b2ac;"></div>
<span class="t" style="left:631.00px;top:304.40px;">Filters Bar</span>
<svg class="i" style="left:772.40px;top:303.80px" width="4.80" height="2.80" viewBox="0 0 16 16" preserveAspectRatio="none"><path d="M0 16h16L8 0z" fill="#000"/></svg>
<svg class="i" style="left:781.40px;top:301.80px" width="4.80" height="5.60" viewBox="0 0 16 16" preserveAspectRatio="none"><path d="M3 1h9v10H3z" fill="#fff" stroke="#000" stroke-width="1.6"/><path d="M9.5 1v10" stroke="#000" stroke-width="3.4"/><path d="M0.5 11.6h15" stroke="#000" stroke-width="1.6"/><path d="M7.5 12v4" stroke="#000" stroke-width="1.6"/></svg>
<svg class="i" style="left:790.60px;top:302.60px" width="4.60" height="4.40" viewBox="0 0 16 16" preserveAspectRatio="none"><path d="M2 2l12 12M14 2L2 14" stroke="#505050" stroke-width="2"/></svg>
<div style="left:629.00px;top:310.60px;width:169.00px;height:17.40px;background:#efeeea;"></div>
<div style="left:630.40px;top:311.60px;width:113.00px;height:15.60px;background:linear-gradient(180deg,#fbfbfa 0%,#f0efec 50%,#dcdad4 100%);border-radius:1.5px 0 0 1.5px;"></div>
<div style="left:743.40px;top:311.60px;width:6.30px;height:15.60px;background:linear-gradient(180deg,#d0cec8 0%,#8e8c88 60%,#6e6c68 100%);border-radius:0 2px 2px 0;"></div>
<div style="left:745.00px;top:321.20px;width:3.00px;height:0.90px;background:#fff;"></div>
<div style="left:745.30px;top:321.50px;width:3.00px;height:0.90px;background:#000;"></div>
<svg class="i" style="left:745.30px;top:323.00px" width="3.40" height="2.20" viewBox="0 0 16 16" preserveAspectRatio="none"><path d="M0 0h16L8 16z" fill="#000"/></svg>
<div style="left:632.60px;top:314.60px;width:1.00px;height:9.60px;background:repeating-linear-gradient(180deg,#a8a6a0 0 1px,transparent 1px 2.5px);"></div>
<div style="left:635.40px;top:313.20px;width:57.20px;height:12.40px;background:#d4d0c8;border:0.8px solid #8c8a84;"></div>
<span class="t" style="left:637.40px;top:319.40px;color:#8c8a84;">Custom</span>
<svg class="i" style="left:686.40px;top:318.40px" width="3.20" height="2.20" viewBox="0 0 16 16" preserveAspectRatio="none"><path d="M0 0h16L8 16z" fill="#8c8a84"/></svg>
<svg class="i" style="left:694.60px;top:314.00px" width="9.60" height="10.60" viewBox="0 0 16 16" preserveAspectRatio="none"><path d="M2 5v9h5" fill="none" stroke="#3050c0" stroke-width="1.6"/><path d="M0 6l2-3 2 3z" fill="#3050c0"/><path d="M6 9C6 4 10 1 14 1c1 4-1 8-6 9z" fill="#30a030" stroke="#186018" stroke-width="0.8"/></svg>
<svg class="i" style="left:706.00px;top:318.40px" width="3.40" height="2.20" viewBox="0 0 16 16" preserveAspectRatio="none"><path d="M0 0h16L8 16z" fill="#000"/></svg>
<svg class="i" style="left:714.00px;top:315.00px" width="11.40" height="8.60" viewBox="0 0 16 14" preserveAspectRatio="none"><path d="M1 11L8 1h7L8 11z" fill="#fafafa" stroke="#404040" stroke-width="1.1"/><path d="M1 11v2h7v-2" fill="#e0e0e0" stroke="#404040" stroke-width="1"/><path d="M8 13L15 3V1" fill="none" stroke="#404040" stroke-width="1"/></svg>
<svg class="i" style="left:729.60px;top:315.20px" width="8.60" height="8.00" viewBox="0 0 16 16" preserveAspectRatio="none"><path d="M2 2l12 12M14 2L2 14" stroke="#8c8c8c" stroke-width="3.6" stroke-linecap="round"/></svg>
<div style="left:629.00px;top:328.40px;width:169.00px;height:118.86px;background:#e8e6e1;border-top:0.8px solid #8c8a84;"></div>
<div class="cell" style="left:640px;top:328.40px;width:51px;height:13.14px;"><span class="t" style="left:1px;top:5.87px">Completion</span></div>
<div style="left:629.00px;top:341.24px;width:169.00px;height:0.80px;background:#bcbab4;"></div>
<div style="left:787.20px;top:329.80px;width:9.40px;height:10.74px;background:#dcdad4;"></div>
<svg class="i" style="left:789.80px;top:333.80px" width="4.20" height="2.80" viewBox="0 0 16 16" preserveAspectRatio="none"><path d="M0 0h16L8 16z" fill="#000"/></svg>
<div class="cell" style="left:640px;top:341.54px;width:51px;height:13.14px;"><span class="t" style="left:1px;top:5.87px">Due Date</span></div>
<div style="left:629.00px;top:354.38px;width:169.00px;height:0.80px;background:#bcbab4;"></div>
<div style="left:787.20px;top:342.94px;width:9.40px;height:10.74px;background:#dcdad4;"></div>
<svg class="i" style="left:789.80px;top:346.94px" width="4.20" height="2.80" viewBox="0 0 16 16" preserveAspectRatio="none"><path d="M0 0h16L8 16z" fill="#000"/></svg>
<div class="cell" style="left:640px;top:354.68px;width:51px;height:13.14px;"><span class="t" style="left:1px;top:5.87px">Status</span></div>
<div style="left:629.00px;top:367.52px;width:169.00px;height:0.80px;background:#bcbab4;"></div>
<div style="left:787.20px;top:356.08px;width:9.40px;height:10.74px;background:#dcdad4;"></div>
<svg class="i" style="left:789.80px;top:360.08px" width="4.20" height="2.80" viewBox="0 0 16 16" preserveAspectRatio="none"><path d="M0 0h16L8 16z" fill="#000"/></svg>
<div class="cell" style="left:640px;top:367.82px;width:51px;height:13.14px;"><span class="t" style="left:1px;top:5.87px">Priority</span></div>
<div style="left:629.00px;top:380.66px;width:169.00px;height:0.80px;background:#bcbab4;"></div>
<div style="left:787.20px;top:369.22px;width:9.40px;height:10.74px;background:#dcdad4;"></div>
<svg class="i" style="left:789.80px;top:373.22px" width="4.20" height="2.80" viewBox="0 0 16 16" preserveAspectRatio="none"><path d="M0 0h16L8 16z" fill="#000"/></svg>
<div class="cell" style="left:640px;top:380.96px;width:51px;height:13.14px;"><span class="t" style="left:1px;top:5.87px">Task Name</span></div>
<div style="left:629.00px;top:393.80px;width:169.00px;height:0.80px;background:#bcbab4;"></div>
<div class="cell" style="left:640px;top:394.10px;width:51px;height:13.14px;"><span class="t" style="left:1px;top:5.87px">Date Created</span></div>
<div style="left:629.00px;top:406.94px;width:169.00px;height:0.80px;background:#bcbab4;"></div>
<div style="left:787.20px;top:395.50px;width:9.40px;height:10.74px;background:#dcdad4;"></div>
<svg class="i" style="left:789.80px;top:399.50px" width="4.20" height="2.80" viewBox="0 0 16 16" preserveAspectRatio="none"><path d="M0 0h16L8 16z" fill="#000"/></svg>
<div class="cell" style="left:640px;top:407.24px;width:51px;height:13.14px;"><span class="t" style="left:1px;top:5.87px">Date Last Modifi</span></div>
<div style="left:629.00px;top:420.08px;width:169.00px;height:0.80px;background:#bcbab4;"></div>
<div style="left:787.20px;top:408.64px;width:9.40px;height:10.74px;background:#dcdad4;"></div>
<svg class="i" style="left:789.80px;top:412.64px" width="4.20" height="2.80" viewBox="0 0 16 16" preserveAspectRatio="none"><path d="M0 0h16L8 16z" fill="#000"/></svg>
<div class="cell" style="left:640px;top:420.38px;width:51px;height:13.14px;"><span class="t" style="left:1px;top:5.87px">Date Opened</span></div>
<div style="left:629.00px;top:433.22px;width:169.00px;height:0.80px;background:#bcbab4;"></div>
<div style="left:787.20px;top:421.78px;width:9.40px;height:10.74px;background:#dcdad4;"></div>
<svg class="i" style="left:789.80px;top:425.78px" width="4.20" height="2.80" viewBox="0 0 16 16" preserveAspectRatio="none"><path d="M0 0h16L8 16z" fill="#000"/></svg>
<div class="cell" style="left:640px;top:433.52px;width:51px;height:13.14px;"><span class="t" style="left:1px;top:5.87px">Date Completed</span></div>
<div style="left:629.00px;top:446.36px;width:169.00px;height:0.80px;background:#bcbab4;"></div>
<div style="left:787.20px;top:434.92px;width:9.40px;height:10.74px;background:#dcdad4;"></div>
<svg class="i" style="left:789.80px;top:438.92px" width="4.20" height="2.80" viewBox="0 0 16 16" preserveAspectRatio="none"><path d="M0 0h16L8 16z" fill="#000"/></svg>
<div style="left:691.20px;top:328.40px;width:0.90px;height:118.26px;background:#a09e98;"></div>
<div style="left:692.10px;top:328.40px;width:0.60px;height:118.26px;background:#fff;"></div>
<div style="left:629.00px;top:447.06px;width:169.00px;height:0.80px;background:#8c8a84;"></div>
</div></body></html>
